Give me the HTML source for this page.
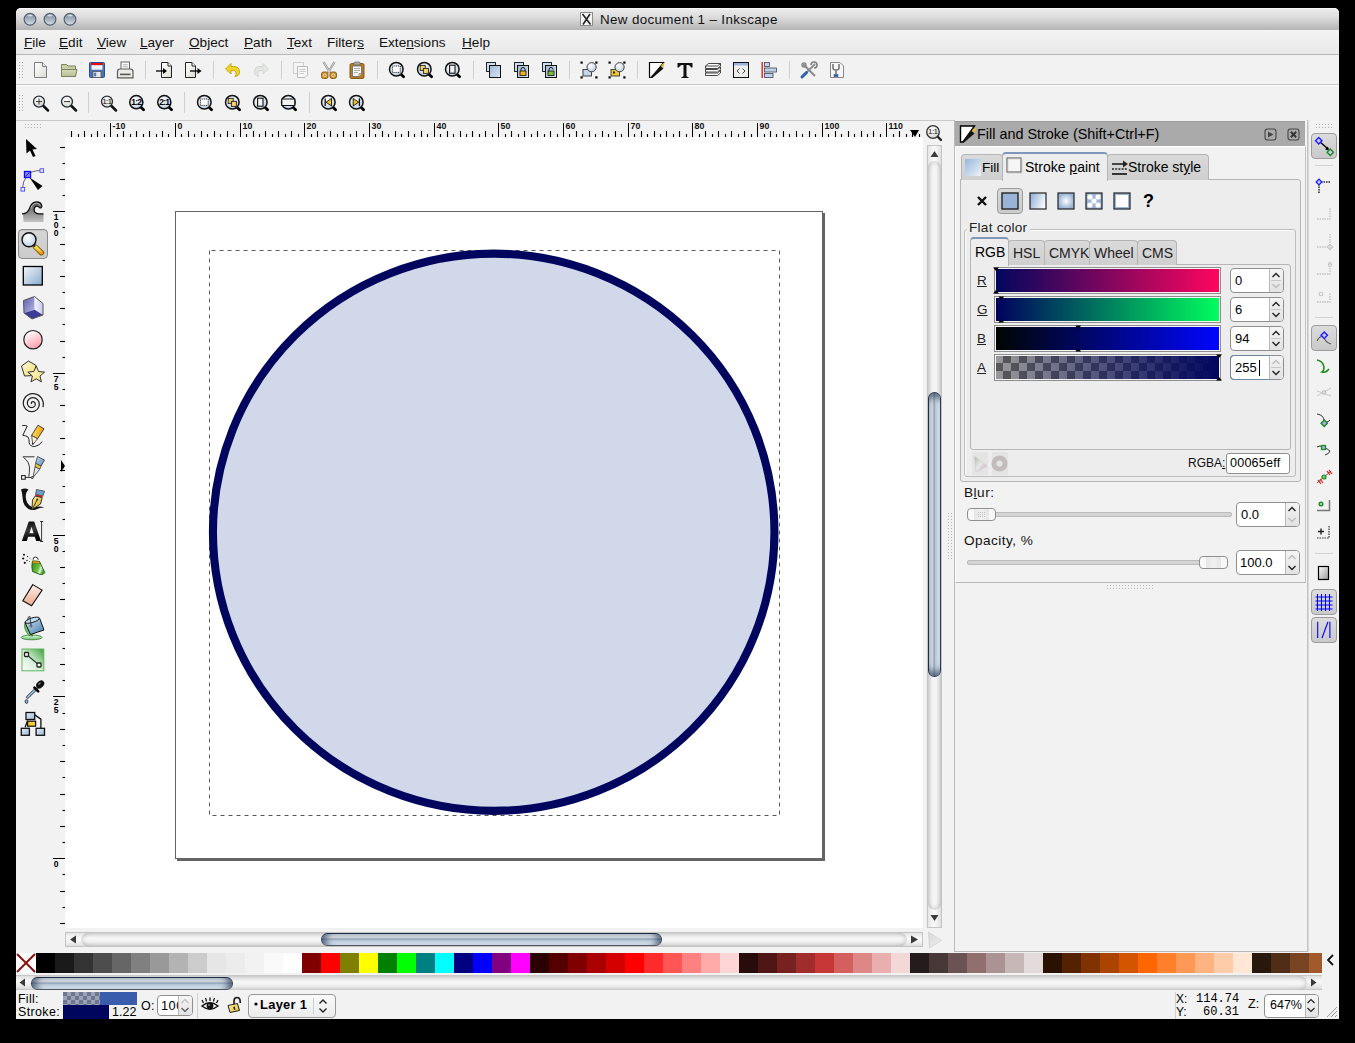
<!DOCTYPE html>
<html><head><meta charset="utf-8"><title>Inkscape</title>
<style>
html,body{margin:0;padding:0;background:#000;}
#root{position:relative;width:1355px;height:1043px;overflow:hidden;background:#000;font-family:"Liberation Sans",sans-serif;}
#root div,#root svg,#root span{position:absolute;box-sizing:border-box;}
#root svg{overflow:visible;}
#root .t{white-space:nowrap;font-size:13px;color:#000;line-height:1;}
#root span.u{position:static;text-decoration:underline;}
</style></head><body><div id="root">
<div style="left:16px;top:8px;width:1323px;height:1011px;background:#f2f2f2;border-radius:5px 5px 0 0;"></div>
<div style="left:16px;top:8px;width:1323px;height:22px;background:linear-gradient(#ececec,#d9d9d9 45%,#b4b4b4);border-radius:5px 5px 0 0;border-top:1px solid #f6f6f6;"></div>
<svg style="left:23px;top:12px;" width="14" height="14" viewBox="0 0 14 14"><defs><linearGradient id="tl30" x1="0" y1="0" x2="0" y2="1"><stop offset="0" stop-color="#7b8a9a"/><stop offset="0.55" stop-color="#a9b6c3"/><stop offset="1" stop-color="#d6e0e8"/></linearGradient></defs><circle cx="7" cy="7.2" r="5.9" fill="url(#tl30)" stroke="#4f5b67" stroke-width="1.1"/><ellipse cx="7" cy="3.6" rx="2.6" ry="1" fill="#e8eef4" opacity="0.75"/></svg>
<svg style="left:43px;top:12px;" width="14" height="14" viewBox="0 0 14 14"><defs><linearGradient id="tl50" x1="0" y1="0" x2="0" y2="1"><stop offset="0" stop-color="#7b8a9a"/><stop offset="0.55" stop-color="#a9b6c3"/><stop offset="1" stop-color="#d6e0e8"/></linearGradient></defs><circle cx="7" cy="7.2" r="5.9" fill="url(#tl50)" stroke="#4f5b67" stroke-width="1.1"/><ellipse cx="7" cy="3.6" rx="2.6" ry="1" fill="#e8eef4" opacity="0.75"/></svg>
<svg style="left:63px;top:12px;" width="14" height="14" viewBox="0 0 14 14"><defs><linearGradient id="tl70" x1="0" y1="0" x2="0" y2="1"><stop offset="0" stop-color="#7b8a9a"/><stop offset="0.55" stop-color="#a9b6c3"/><stop offset="1" stop-color="#d6e0e8"/></linearGradient></defs><circle cx="7" cy="7.2" r="5.9" fill="url(#tl70)" stroke="#4f5b67" stroke-width="1.1"/><ellipse cx="7" cy="3.6" rx="2.6" ry="1" fill="#e8eef4" opacity="0.75"/></svg>
<svg style="left:580px;top:12px;" width="13" height="14" viewBox="0 0 13 14"><rect x="0.5" y="0.5" width="12" height="13" fill="#f4f4f4" stroke="#8a8a8a"/><path d="M2.5 2 L10.5 12.5 M10 2 L3 12.5" stroke="#222" stroke-width="1.6"/></svg>
<span class="t" style="left:600px;top:13px;font-size:13.4px;letter-spacing:0.35px;color:#111;">New document 1 &#8211; Inkscape</span>
<div style="left:16px;top:30px;width:1323px;height:25px;background:linear-gradient(#f3f3f3,#e9e9e9);border-bottom:1px solid #b8b8b8;"></div>
<span class="t" style="left:24px;top:36px;font-size:13.6px;color:#111;"><span class="u">F</span>ile</span>
<span class="t" style="left:59px;top:36px;font-size:13.6px;color:#111;"><span class="u">E</span>dit</span>
<span class="t" style="left:97px;top:36px;font-size:13.6px;color:#111;"><span class="u">V</span>iew</span>
<span class="t" style="left:140px;top:36px;font-size:13.6px;color:#111;"><span class="u">L</span>ayer</span>
<span class="t" style="left:189px;top:36px;font-size:13.6px;color:#111;"><span class="u">O</span>bject</span>
<span class="t" style="left:244px;top:36px;font-size:13.6px;color:#111;"><span class="u">P</span>ath</span>
<span class="t" style="left:287px;top:36px;font-size:13.6px;color:#111;"><span class="u">T</span>ext</span>
<span class="t" style="left:327px;top:36px;font-size:13.6px;color:#111;">Filter<span class="u">s</span></span>
<span class="t" style="left:379px;top:36px;font-size:13.6px;color:#111;">Exte<span class="u">n</span>sions</span>
<span class="t" style="left:462px;top:36px;font-size:13.6px;color:#111;"><span class="u">H</span>elp</span>
<div style="left:16px;top:55px;width:1323px;height:30px;background:#f2f2f2;border-bottom:1px solid #c6c6c6;"></div>
<div style="left:16px;top:85px;width:1323px;height:1px;background:#fcfcfc;"></div>
<div style="left:16px;top:86px;width:1323px;height:35px;background:#f2f2f2;border-bottom:1px solid #c8c8c8;"></div>
<svg style="left:19px;top:62px;" width="6" height="18" viewBox="0 0 6 18"><rect x="0" y="0" width="1" height="1" fill="#aaa"/><rect x="3" y="0" width="1" height="1" fill="#aaa"/><rect x="0" y="3" width="1" height="1" fill="#aaa"/><rect x="3" y="3" width="1" height="1" fill="#aaa"/><rect x="0" y="6" width="1" height="1" fill="#aaa"/><rect x="3" y="6" width="1" height="1" fill="#aaa"/><rect x="0" y="9" width="1" height="1" fill="#aaa"/><rect x="3" y="9" width="1" height="1" fill="#aaa"/><rect x="0" y="12" width="1" height="1" fill="#aaa"/><rect x="3" y="12" width="1" height="1" fill="#aaa"/><rect x="0" y="15" width="1" height="1" fill="#aaa"/><rect x="3" y="15" width="1" height="1" fill="#aaa"/></svg>
<svg style="left:19px;top:95px;" width="6" height="18" viewBox="0 0 6 18"><rect x="0" y="0" width="1" height="1" fill="#aaa"/><rect x="3" y="0" width="1" height="1" fill="#aaa"/><rect x="0" y="3" width="1" height="1" fill="#aaa"/><rect x="3" y="3" width="1" height="1" fill="#aaa"/><rect x="0" y="6" width="1" height="1" fill="#aaa"/><rect x="3" y="6" width="1" height="1" fill="#aaa"/><rect x="0" y="9" width="1" height="1" fill="#aaa"/><rect x="3" y="9" width="1" height="1" fill="#aaa"/><rect x="0" y="12" width="1" height="1" fill="#aaa"/><rect x="3" y="12" width="1" height="1" fill="#aaa"/><rect x="0" y="15" width="1" height="1" fill="#aaa"/><rect x="3" y="15" width="1" height="1" fill="#aaa"/></svg>
<svg style="left:0;top:0" width="0" height="0"><defs><linearGradient id="gpage" x1="0" y1="0" x2="1" y2="1"><stop offset="0" stop-color="#ffffff"/><stop offset="1" stop-color="#dcdcd6"/></linearGradient><linearGradient id="gblue" x1="0" y1="0" x2="1" y2="1"><stop offset="0" stop-color="#aec6e0"/><stop offset="1" stop-color="#e6eef6"/></linearGradient><linearGradient id="gblue2" x1="0" y1="0" x2="1" y2="1"><stop offset="0" stop-color="#9fb9d6"/><stop offset="1" stop-color="#dbe6f1"/></linearGradient><radialGradient id="glens" cx="40%" cy="35%" r="70%"><stop offset="0" stop-color="#ffffff"/><stop offset="1" stop-color="#b9cde3"/></radialGradient><radialGradient id="glensg" cx="40%" cy="35%" r="70%"><stop offset="0" stop-color="#ffffff"/><stop offset="1" stop-color="#d0d4cc"/></radialGradient><linearGradient id="gfolder" x1="0" y1="0" x2="0" y2="1"><stop offset="0" stop-color="#d6dcb8"/><stop offset="1" stop-color="#b6be93"/></linearGradient></defs></svg>
<svg style="left:32px;top:61px;" width="18" height="18" viewBox="0 0 18 18"><path d="M2.5 1.5 H10.5 L14.5 5.5 V16.5 H2.5 Z" fill="url(#gpage)" stroke="#7c7c7c"/><path d="M10.5 1.5 V5.5 H14.5" fill="#eee" stroke="#7c7c7c"/></svg>
<svg style="left:60px;top:61px;" width="18" height="18" viewBox="0 0 18 18"><path d="M1.5 3.5 H6.5 L8 5 H15.5 V15.5 H1.5 Z" fill="#c8cfa6" stroke="#7d8360"/><path d="M1.5 8.5 H17 L15.5 15.5 H1.5 Z" fill="url(#gfolder)" stroke="#7d8360"/></svg>
<svg style="left:88px;top:61px;" width="18" height="18" viewBox="0 0 18 18"><rect x="1.5" y="1.5" width="15" height="15" rx="1" fill="#4a72b8" stroke="#2b4f8f"/><rect x="3" y="2" width="12" height="2.2" fill="#e01010"/><rect x="3.5" y="4.2" width="11" height="4.5" fill="#f4f4f4"/><rect x="5" y="10.5" width="8" height="6" fill="#e8e8e8" stroke="#555" stroke-width="0.8"/><rect x="6.2" y="11.7" width="2" height="3.6" fill="#4a72b8"/></svg>
<svg style="left:116px;top:61px;" width="18" height="18" viewBox="0 0 18 18"><rect x="5" y="1" width="8.5" height="8" fill="#fafafa" stroke="#666" stroke-width="1"/><path d="M6.8 3.8 H11.8 M6.8 5.8 H11.8" stroke="#aaa" stroke-width="0.9"/><path d="M1.5 10.5 Q1.5 8 4 8 H14.5 Q17 8 17 10.5 V16.8 H1.5 Z" fill="#ecece6" stroke="#5a5a5a" stroke-width="1.2"/><rect x="4" y="12.6" width="10.5" height="1.6" fill="#555"/></svg>
<div style="left:145px;top:61px;width:1px;height:18px;background:#cfcfcf;"></div>
<svg style="left:156px;top:61px;" width="18" height="18" viewBox="0 0 18 18"><path d="M5.5 1.5 H12 L15.5 5 V16.5 H5.5 Z" fill="url(#gpage)" stroke="#222"/><path d="M12 1.5 V5 H15.5" fill="#fff" stroke="#222"/><path d="M0 10 H8" stroke="#000" stroke-width="1.3"/><path d="M7 7 L11 10 L7 13 Z" fill="#000"/></svg>
<svg style="left:184px;top:61px;" width="18" height="18" viewBox="0 0 18 18"><path d="M1.5 1.5 H8 L11.5 5 V16.5 H1.5 Z" fill="url(#gpage)" stroke="#222"/><path d="M8 1.5 V5 H11.5" fill="#fff" stroke="#222"/><path d="M6 10 H14" stroke="#000" stroke-width="1.3"/><path d="M13.5 7 L17.5 10 L13.5 13 Z" fill="#000"/></svg>
<div style="left:213px;top:61px;width:1px;height:18px;background:#cfcfcf;"></div>
<svg style="left:224px;top:61px;" width="18" height="18" viewBox="0 0 18 18"><path d="M1.5 8 L7 2.5 V5.5 H9.5 Q15.5 5.5 15.5 11 Q15.5 15 11 15.5 Q13 13 12 11 Q11 9.5 9 9.5 H7 V13 Z" fill="#f3d22a" stroke="#c2a000" stroke-width="0.9"/></svg>
<svg style="left:252px;top:61px;" width="18" height="18" viewBox="0 0 18 18"><path d="M16.5 8 L11 2.5 V5.5 H8.5 Q2.5 5.5 2.5 11 Q2.5 15 7 15.5 Q5 13 6 11 Q7 9.5 9 9.5 H11 V13 Z" fill="#e4e6e4" stroke="#cfd2cf" stroke-width="0.9"/></svg>
<div style="left:281px;top:61px;width:1px;height:18px;background:#cfcfcf;"></div>
<svg style="left:292px;top:61px;" width="18" height="18" viewBox="0 0 18 18"><rect x="1.5" y="1.5" width="10" height="11" fill="#f4f4f4" stroke="#cfcfcf"/><path d="M5.5 5.5 H15.5 V14 L13 16.5 H5.5 Z" fill="#f8f8f8" stroke="#b9b9b9"/><path d="M7.5 8.5 H13.5 M7.5 10.5 H13.5 M7.5 12.5 H12" stroke="#c8c8c8"/></svg>
<svg style="left:320px;top:61px;" width="18" height="18" viewBox="0 0 18 18"><path d="M3.5 1 L10 11.5 M14.5 1 L8 11.5" stroke="#8c8c8c" stroke-width="2.2"/><path d="M3.5 1 L10 11.5 M14.5 1 L8 11.5" stroke="#e8e8e8" stroke-width="0.8"/><rect x="1.5" y="11" width="6.5" height="6.5" rx="2" fill="#c8902a" stroke="#8a5a10" stroke-width="0.9"/><rect x="10" y="11" width="6.5" height="6.5" rx="2" fill="#c8902a" stroke="#8a5a10" stroke-width="0.9"/><circle cx="4.75" cy="14.25" r="1.5" fill="none" stroke="#f4e0b8" stroke-width="0.9"/><circle cx="13.25" cy="14.25" r="1.5" fill="none" stroke="#f4e0b8" stroke-width="0.9"/></svg>
<svg style="left:348px;top:61px;" width="18" height="18" viewBox="0 0 18 18"><rect x="2" y="2.5" width="14" height="15" rx="1.5" fill="#b87a22" stroke="#7a4e0e" stroke-width="0.9"/><rect x="6" y="1" width="6" height="3" rx="1" fill="#aaa" stroke="#666" stroke-width="0.7"/><path d="M4.5 5 H13.5 V12.5 L11 15.5 H4.5 Z" fill="#f7f7f7" stroke="#666" stroke-width="0.8"/><path d="M11 15.5 V12.5 H13.5" fill="#ddd" stroke="#666" stroke-width="0.6"/><path d="M6 7.5 H12 M6 9.5 H12 M6 11.5 H10" stroke="#999" stroke-width="0.8"/></svg>
<div style="left:377px;top:61px;width:1px;height:18px;background:#cfcfcf;"></div>
<svg style="left:388px;top:61px;" width="18" height="18" viewBox="0 0 18 18"><path d="M13.2 13.4 L15.6 15.8" stroke="#000" stroke-width="2.8" stroke-linecap="round"/><circle cx="8.3" cy="8.2" r="6.8" fill="url(#glens)" stroke="#111" stroke-width="1.5"/><rect x="4.4" y="5" width="7.8" height="6.4" fill="#fff" stroke="#111" stroke-width="1" stroke-dasharray="1 0.9"/></svg>
<svg style="left:416px;top:61px;" width="18" height="18" viewBox="0 0 18 18"><path d="M13.2 13.4 L15.6 15.8" stroke="#000" stroke-width="2.8" stroke-linecap="round"/><circle cx="8.3" cy="8.2" r="6.8" fill="url(#glens)" stroke="#111" stroke-width="1.5"/><rect x="4.2" y="4.4" width="5" height="5" fill="#f6d46a" stroke="#222" stroke-width="0.9"/><rect x="7.4" y="7.4" width="5" height="5" fill="#f6d46a" stroke="#222" stroke-width="0.9"/></svg>
<svg style="left:444px;top:61px;" width="18" height="18" viewBox="0 0 18 18"><path d="M13.2 13.4 L15.6 15.8" stroke="#000" stroke-width="2.8" stroke-linecap="round"/><circle cx="8.3" cy="8.2" r="6.8" fill="url(#glens)" stroke="#111" stroke-width="1.5"/><rect x="5.6" y="4.2" width="5.4" height="8" fill="#f3f3f3" stroke="#111" stroke-width="1.1"/></svg>
<div style="left:473px;top:61px;width:1px;height:18px;background:#cfcfcf;"></div>
<svg style="left:484px;top:61px;" width="18" height="18" viewBox="0 0 18 18"><rect x="2.5" y="1.5" width="9" height="9" fill="#cfdcec" stroke="#223"/><rect x="5.5" y="4.5" width="11" height="12" fill="url(#gblue2)" stroke="#111"/></svg>
<svg style="left:512px;top:61px;" width="18" height="18" viewBox="0 0 18 18"><rect x="2.5" y="1.5" width="9" height="9" fill="#cfdcec" stroke="#223"/><rect x="5.5" y="4.5" width="11" height="12" fill="url(#gblue2)" stroke="#111"/><path d="M9 10 V8.5 Q9 6.5 11 6.5 Q13 6.5 13 8.5 V10" fill="none" stroke="#111"/><rect x="8" y="10" width="6" height="4.5" fill="#f2b320" stroke="#111" stroke-width="0.8"/></svg>
<svg style="left:540px;top:61px;" width="18" height="18" viewBox="0 0 18 18"><rect x="2.5" y="1.5" width="9" height="9" fill="#cfdcec" stroke="#223"/><rect x="5.5" y="4.5" width="11" height="12" fill="url(#gblue2)" stroke="#111"/><path d="M9 10 V8.5 Q9 6.5 11 6.5 Q13 6.5 13 8.5" fill="none" stroke="#111"/><rect x="8" y="10" width="6" height="4.5" fill="#7cbf3a" stroke="#111" stroke-width="0.8"/></svg>
<div style="left:569px;top:61px;width:1px;height:18px;background:#cfcfcf;"></div>
<svg style="left:580px;top:61px;" width="18" height="18" viewBox="0 0 18 18"><rect x="0.5" y="0.5" width="2.2" height="2.2" fill="#000"/><rect x="15.3" y="0.5" width="2.2" height="2.2" fill="#000"/><rect x="0.5" y="15.3" width="2.2" height="2.2" fill="#000"/><rect x="15.3" y="15.3" width="2.2" height="2.2" fill="#000"/><rect x="3" y="8.5" width="8.5" height="6.5" fill="#c4d6ea" stroke="#333" stroke-width="0.9"/><circle cx="11.6" cy="6.2" r="4.6" fill="url(#glens)" stroke="#333" stroke-width="0.9"/></svg>
<svg style="left:608px;top:61px;" width="18" height="18" viewBox="0 0 18 18"><rect x="0.5" y="0.5" width="2.2" height="2.2" fill="#000"/><rect x="15.3" y="0.5" width="2.2" height="2.2" fill="#000"/><rect x="0.5" y="15.3" width="2.2" height="2.2" fill="#000"/><rect x="15.3" y="15.3" width="2.2" height="2.2" fill="#000"/><rect x="3" y="8.5" width="8.5" height="6.5" fill="#f1c731" stroke="#333" stroke-width="0.9"/><rect x="5" y="10.5" width="2" height="2" fill="#222"/><circle cx="11.6" cy="6.2" r="4.6" fill="url(#glens)" stroke="#333" stroke-width="0.9"/></svg>
<div style="left:637px;top:61px;width:1px;height:18px;background:#cfcfcf;"></div>
<svg style="left:648px;top:61px;" width="18" height="18" viewBox="0 0 18 18"><path d="M1.5 1.5 H15.5 L4 16.5 H1.5 Z" fill="#fff" stroke="#000" stroke-width="1.2"/><path d="M2.5 16 L12.5 5 L15.5 7.5 L5 16.5 Z" fill="#111"/><path d="M13 4 L16.5 1.5 L15.5 7 Z" fill="#f0b81a"/></svg>
<svg style="left:676px;top:61px;" width="18" height="18" viewBox="0 0 18 18"><path d="M1.5 2 H16.5 V6.5 H15 Q14.5 4 12 4 H10.5 V15 Q10.5 16 12.5 16 V17 H5.5 V16 Q7.5 16 7.5 15 V4 H6 Q3.5 4 3 6.5 H1.5 Z" fill="#111"/></svg>
<svg style="left:704px;top:61px;" width="18" height="18" viewBox="0 0 18 18"><path d="M1.5 12 L4.5 9.5 H16.5 V12 L13.5 14.5 H1.5 Z" fill="#fff" stroke="#333" stroke-width="0.9"/><path d="M1.5 12 H13.5 L16.5 9.5" fill="none" stroke="#333" stroke-width="0.9"/><path d="M1.5 8.5 L4.5 6 H16.5 V8.5 L13.5 11 H1.5 Z" fill="#fff" stroke="#333" stroke-width="0.9"/><path d="M1.5 8.5 H13.5 L16.5 6" fill="none" stroke="#333" stroke-width="0.9"/><path d="M1.5 5 L4.5 2.5 H16.5 V5 L13.5 7.5 H1.5 Z" fill="#fff" stroke="#333" stroke-width="0.9"/><path d="M1.5 5 H13.5 L16.5 2.5" fill="none" stroke="#333" stroke-width="0.9"/></svg>
<svg style="left:732px;top:61px;" width="18" height="18" viewBox="0 0 18 18"><rect x="1.5" y="1.5" width="15" height="15" fill="#eeeeea" stroke="#111"/><rect x="2" y="2" width="14" height="2.5" fill="#9db7d8"/><path d="M7.5 7.5 L5 10 L7.5 12.5 M10.5 7.5 L13 10 L10.5 12.5" fill="none" stroke="#333" stroke-width="0.9"/></svg>
<svg style="left:760px;top:61px;" width="18" height="18" viewBox="0 0 18 18"><rect x="1.5" y="1" width="1.4" height="16" fill="#d22"/><rect x="4.5" y="1.5" width="5" height="4" fill="#bcd2ea" stroke="#445" stroke-width="0.8"/><rect x="4.5" y="7" width="12" height="4" fill="#bcd2ea" stroke="#445" stroke-width="0.8"/><rect x="4.5" y="12.5" width="8.5" height="4" fill="#bcd2ea" stroke="#445" stroke-width="0.8"/></svg>
<div style="left:789px;top:61px;width:1px;height:18px;background:#cfcfcf;"></div>
<svg style="left:800px;top:61px;" width="18" height="18" viewBox="0 0 18 18"><path d="M3 3 L15 15" stroke="#8a8a8a" stroke-width="2"/><path d="M15 3 L6 12" stroke="#8f8f8f" stroke-width="2"/><path d="M2 16 L6.5 11.5" stroke="#2e5fb0" stroke-width="3" stroke-linecap="round"/><path d="M11 4 A3 3 0 1 1 14 7" fill="none" stroke="#7f7f7f" stroke-width="1.6"/><circle cx="4" cy="4" r="2" fill="none" stroke="#888" stroke-width="1.4"/></svg>
<svg style="left:828px;top:61px;" width="18" height="18" viewBox="0 0 18 18"><path d="M2.5 1.5 H12 L15.5 5 V16.5 H2.5 Z" fill="#f6f6f6" stroke="#888"/><path d="M5 3 V7 Q5 9 8 9 Q11 9 11 7 V3 M8 9 V16" fill="none" stroke="#777" stroke-width="1.6"/><path d="M6.5 13 V16 M9.5 13 V16 M6.5 14.5 H9.5" stroke="#2e5fb0" stroke-width="1.4"/></svg>
<svg style="left:32px;top:94px;" width="18" height="18" viewBox="0 0 18 18"><path d="M11 11.5 L16 16.5" stroke="#111" stroke-width="2.5" stroke-linecap="round"/><circle cx="7" cy="7.6" r="5.5" fill="url(#glensg)" stroke="#263038" stroke-width="1.25"/><path d="M4 7.6 H10 M7 4.6 V10.6" stroke="#333" stroke-width="1"/></svg>
<svg style="left:60px;top:94px;" width="18" height="18" viewBox="0 0 18 18"><path d="M11 11.5 L16 16.5" stroke="#111" stroke-width="2.5" stroke-linecap="round"/><circle cx="7" cy="7.6" r="5.5" fill="url(#glensg)" stroke="#263038" stroke-width="1.25"/><path d="M4 7.6 H10" stroke="#333" stroke-width="1"/></svg>
<div style="left:88px;top:92px;width:1px;height:21px;background:#cfcfcf;"></div>
<svg style="left:100px;top:94px;" width="18" height="18" viewBox="0 0 18 18"><path d="M11 11.5 L16 16.5" stroke="#111" stroke-width="2.5" stroke-linecap="round"/><circle cx="7" cy="7.6" r="5.5" fill="url(#glensg)" stroke="#263038" stroke-width="1.25"/><text x="7" y="10" font-size="6.6" font-weight="bold" text-anchor="middle" fill="#3a3a3a" font-family="Liberation Sans" letter-spacing="-0.3">1:1</text></svg>
<svg style="left:128px;top:94px;" width="18" height="18" viewBox="0 0 18 18"><path d="M13.2 13.4 L15.6 15.8" stroke="#000" stroke-width="2.8" stroke-linecap="round"/><circle cx="8.3" cy="8.2" r="6.6" fill="url(#glens)" stroke="#111" stroke-width="1.5"/><text x="8.3" y="11.2" font-size="8.6" font-weight="bold" text-anchor="middle" fill="#000" font-family="Liberation Sans" letter-spacing="-0.7">1:2</text></svg>
<svg style="left:156px;top:94px;" width="18" height="18" viewBox="0 0 18 18"><path d="M13.2 13.4 L15.6 15.8" stroke="#000" stroke-width="2.8" stroke-linecap="round"/><circle cx="8.3" cy="8.2" r="6.6" fill="url(#glens)" stroke="#111" stroke-width="1.5"/><text x="8.3" y="11.2" font-size="8.6" font-weight="bold" text-anchor="middle" fill="#000" font-family="Liberation Sans" letter-spacing="-0.7">2:1</text></svg>
<div style="left:184px;top:92px;width:1px;height:21px;background:#cfcfcf;"></div>
<svg style="left:196px;top:94px;" width="18" height="18" viewBox="0 0 18 18"><path d="M13.2 13.4 L15.6 15.8" stroke="#000" stroke-width="2.8" stroke-linecap="round"/><circle cx="8.3" cy="8.2" r="6.8" fill="url(#glens)" stroke="#111" stroke-width="1.5"/><rect x="4.4" y="5" width="7.8" height="6.4" fill="#fff" stroke="#111" stroke-width="1" stroke-dasharray="1 0.9"/></svg>
<svg style="left:224px;top:94px;" width="18" height="18" viewBox="0 0 18 18"><path d="M13.2 13.4 L15.6 15.8" stroke="#000" stroke-width="2.8" stroke-linecap="round"/><circle cx="8.3" cy="8.2" r="6.8" fill="url(#glens)" stroke="#111" stroke-width="1.5"/><rect x="4.2" y="4.4" width="5" height="5" fill="#f6d46a" stroke="#222" stroke-width="0.9"/><rect x="7.4" y="7.4" width="5" height="5" fill="#f6d46a" stroke="#222" stroke-width="0.9"/></svg>
<svg style="left:252px;top:94px;" width="18" height="18" viewBox="0 0 18 18"><path d="M13.2 13.4 L15.6 15.8" stroke="#000" stroke-width="2.8" stroke-linecap="round"/><circle cx="8.3" cy="8.2" r="6.8" fill="url(#glens)" stroke="#111" stroke-width="1.5"/><rect x="5.6" y="4.2" width="5.4" height="8" fill="#f3f3f3" stroke="#111" stroke-width="1.1"/></svg>
<svg style="left:280px;top:94px;" width="18" height="18" viewBox="0 0 18 18"><path d="M13.2 13.4 L15.6 15.8" stroke="#000" stroke-width="2.8" stroke-linecap="round"/><circle cx="8.3" cy="8.2" r="6.8" fill="url(#glens)" stroke="#111" stroke-width="1.5"/><path d="M1.8 5 H14.8 V11.5 H1.8 Z" fill="#f3f3f3" stroke="#111" stroke-width="1.1"/></svg>
<div style="left:309px;top:92px;width:1px;height:21px;background:#cfcfcf;"></div>
<svg style="left:320px;top:94px;" width="18" height="18" viewBox="0 0 18 18"><path d="M13.2 13.4 L15.6 15.8" stroke="#000" stroke-width="2.8" stroke-linecap="round"/><circle cx="8.3" cy="8.2" r="6.8" fill="url(#glens)" stroke="#111" stroke-width="1.5"/><path d="M11.5 4.4 L6 8.2 L11.5 12 Z" fill="#f3c21b" stroke="#111" stroke-width="0.9"/><path d="M5.2 4.4 V12" stroke="#111" stroke-width="1.3"/></svg>
<svg style="left:348px;top:94px;" width="18" height="18" viewBox="0 0 18 18"><path d="M13.2 13.4 L15.6 15.8" stroke="#000" stroke-width="2.8" stroke-linecap="round"/><circle cx="8.3" cy="8.2" r="6.8" fill="url(#glens)" stroke="#111" stroke-width="1.5"/><path d="M5.2 4.4 L10.6 8.2 L5.2 12 Z" fill="#f3c21b" stroke="#111" stroke-width="0.9"/><path d="M11.4 4.4 V12" stroke="#111" stroke-width="1.3"/></svg>
<div style="left:16px;top:121px;width:938px;height:16px;background:#f2f2f2;"></div>
<div style="left:65px;top:137px;width:858px;height:791px;background:#ffffff;"></div>
<svg style="left:65px;top:121px;" width="858" height="16" viewBox="0 0 858 16"><path d="M6.5 10 V16" stroke="#000" stroke-width="1.1"/><path d="M13.5 13 V16" stroke="#000" stroke-width="1.1"/><path d="M19.5 10 V16" stroke="#000" stroke-width="1.1"/><path d="M26.5 13 V16" stroke="#000" stroke-width="1.1"/><path d="M32.5 10 V16" stroke="#000" stroke-width="1.1"/><path d="M39.5 13 V16" stroke="#000" stroke-width="1.1"/><path d="M45.5 2 V16" stroke="#000" stroke-width="1"/><text x="47.5" y="7.8" font-size="8.8" font-weight="bold" font-family="Liberation Sans" fill="#111" letter-spacing="0.15">-10</text><path d="M52.5 13 V16" stroke="#000" stroke-width="1.1"/><path d="M58.5 10 V16" stroke="#000" stroke-width="1.1"/><path d="M65.5 13 V16" stroke="#000" stroke-width="1.1"/><path d="M71.5 10 V16" stroke="#000" stroke-width="1.1"/><path d="M78.5 13 V16" stroke="#000" stroke-width="1.1"/><path d="M84.5 10 V16" stroke="#000" stroke-width="1.1"/><path d="M91.5 13 V16" stroke="#000" stroke-width="1.1"/><path d="M97.5 10 V16" stroke="#000" stroke-width="1.1"/><path d="M103.5 13 V16" stroke="#000" stroke-width="1.1"/><path d="M110.5 2 V16" stroke="#000" stroke-width="1"/><text x="112.5" y="7.8" font-size="8.8" font-weight="bold" font-family="Liberation Sans" fill="#111" letter-spacing="0.15">0</text><path d="M116.5 13 V16" stroke="#000" stroke-width="1.1"/><path d="M123.5 10 V16" stroke="#000" stroke-width="1.1"/><path d="M129.5 13 V16" stroke="#000" stroke-width="1.1"/><path d="M136.5 10 V16" stroke="#000" stroke-width="1.1"/><path d="M142.5 13 V16" stroke="#000" stroke-width="1.1"/><path d="M149.5 10 V16" stroke="#000" stroke-width="1.1"/><path d="M155.5 13 V16" stroke="#000" stroke-width="1.1"/><path d="M162.5 10 V16" stroke="#000" stroke-width="1.1"/><path d="M168.5 13 V16" stroke="#000" stroke-width="1.1"/><path d="M175.5 2 V16" stroke="#000" stroke-width="1"/><text x="177.5" y="7.8" font-size="8.8" font-weight="bold" font-family="Liberation Sans" fill="#111" letter-spacing="0.15">10</text><path d="M181.5 13 V16" stroke="#000" stroke-width="1.1"/><path d="M188.5 10 V16" stroke="#000" stroke-width="1.1"/><path d="M194.5 13 V16" stroke="#000" stroke-width="1.1"/><path d="M200.5 10 V16" stroke="#000" stroke-width="1.1"/><path d="M207.5 13 V16" stroke="#000" stroke-width="1.1"/><path d="M213.5 10 V16" stroke="#000" stroke-width="1.1"/><path d="M220.5 13 V16" stroke="#000" stroke-width="1.1"/><path d="M226.5 10 V16" stroke="#000" stroke-width="1.1"/><path d="M233.5 13 V16" stroke="#000" stroke-width="1.1"/><path d="M239.5 2 V16" stroke="#000" stroke-width="1"/><text x="241.5" y="7.8" font-size="8.8" font-weight="bold" font-family="Liberation Sans" fill="#111" letter-spacing="0.15">20</text><path d="M246.5 13 V16" stroke="#000" stroke-width="1.1"/><path d="M252.5 10 V16" stroke="#000" stroke-width="1.1"/><path d="M259.5 13 V16" stroke="#000" stroke-width="1.1"/><path d="M265.5 10 V16" stroke="#000" stroke-width="1.1"/><path d="M272.5 13 V16" stroke="#000" stroke-width="1.1"/><path d="M278.5 10 V16" stroke="#000" stroke-width="1.1"/><path d="M285.5 13 V16" stroke="#000" stroke-width="1.1"/><path d="M291.5 10 V16" stroke="#000" stroke-width="1.1"/><path d="M298.5 13 V16" stroke="#000" stroke-width="1.1"/><path d="M304.5 2 V16" stroke="#000" stroke-width="1"/><text x="306.5" y="7.8" font-size="8.8" font-weight="bold" font-family="Liberation Sans" fill="#111" letter-spacing="0.15">30</text><path d="M310.5 13 V16" stroke="#000" stroke-width="1.1"/><path d="M317.5 10 V16" stroke="#000" stroke-width="1.1"/><path d="M323.5 13 V16" stroke="#000" stroke-width="1.1"/><path d="M330.5 10 V16" stroke="#000" stroke-width="1.1"/><path d="M336.5 13 V16" stroke="#000" stroke-width="1.1"/><path d="M343.5 10 V16" stroke="#000" stroke-width="1.1"/><path d="M349.5 13 V16" stroke="#000" stroke-width="1.1"/><path d="M356.5 10 V16" stroke="#000" stroke-width="1.1"/><path d="M362.5 13 V16" stroke="#000" stroke-width="1.1"/><path d="M369.5 2 V16" stroke="#000" stroke-width="1"/><text x="371.5" y="7.8" font-size="8.8" font-weight="bold" font-family="Liberation Sans" fill="#111" letter-spacing="0.15">40</text><path d="M375.5 13 V16" stroke="#000" stroke-width="1.1"/><path d="M382.5 10 V16" stroke="#000" stroke-width="1.1"/><path d="M388.5 13 V16" stroke="#000" stroke-width="1.1"/><path d="M395.5 10 V16" stroke="#000" stroke-width="1.1"/><path d="M401.5 13 V16" stroke="#000" stroke-width="1.1"/><path d="M407.5 10 V16" stroke="#000" stroke-width="1.1"/><path d="M414.5 13 V16" stroke="#000" stroke-width="1.1"/><path d="M420.5 10 V16" stroke="#000" stroke-width="1.1"/><path d="M427.5 13 V16" stroke="#000" stroke-width="1.1"/><path d="M433.5 2 V16" stroke="#000" stroke-width="1"/><text x="435.5" y="7.8" font-size="8.8" font-weight="bold" font-family="Liberation Sans" fill="#111" letter-spacing="0.15">50</text><path d="M440.5 13 V16" stroke="#000" stroke-width="1.1"/><path d="M446.5 10 V16" stroke="#000" stroke-width="1.1"/><path d="M453.5 13 V16" stroke="#000" stroke-width="1.1"/><path d="M459.5 10 V16" stroke="#000" stroke-width="1.1"/><path d="M466.5 13 V16" stroke="#000" stroke-width="1.1"/><path d="M472.5 10 V16" stroke="#000" stroke-width="1.1"/><path d="M479.5 13 V16" stroke="#000" stroke-width="1.1"/><path d="M485.5 10 V16" stroke="#000" stroke-width="1.1"/><path d="M492.5 13 V16" stroke="#000" stroke-width="1.1"/><path d="M498.5 2 V16" stroke="#000" stroke-width="1"/><text x="500.5" y="7.8" font-size="8.8" font-weight="bold" font-family="Liberation Sans" fill="#111" letter-spacing="0.15">60</text><path d="M504.5 13 V16" stroke="#000" stroke-width="1.1"/><path d="M511.5 10 V16" stroke="#000" stroke-width="1.1"/><path d="M517.5 13 V16" stroke="#000" stroke-width="1.1"/><path d="M524.5 10 V16" stroke="#000" stroke-width="1.1"/><path d="M530.5 13 V16" stroke="#000" stroke-width="1.1"/><path d="M537.5 10 V16" stroke="#000" stroke-width="1.1"/><path d="M543.5 13 V16" stroke="#000" stroke-width="1.1"/><path d="M550.5 10 V16" stroke="#000" stroke-width="1.1"/><path d="M556.5 13 V16" stroke="#000" stroke-width="1.1"/><path d="M563.5 2 V16" stroke="#000" stroke-width="1"/><text x="565.5" y="7.8" font-size="8.8" font-weight="bold" font-family="Liberation Sans" fill="#111" letter-spacing="0.15">70</text><path d="M569.5 13 V16" stroke="#000" stroke-width="1.1"/><path d="M576.5 10 V16" stroke="#000" stroke-width="1.1"/><path d="M582.5 13 V16" stroke="#000" stroke-width="1.1"/><path d="M589.5 10 V16" stroke="#000" stroke-width="1.1"/><path d="M595.5 13 V16" stroke="#000" stroke-width="1.1"/><path d="M601.5 10 V16" stroke="#000" stroke-width="1.1"/><path d="M608.5 13 V16" stroke="#000" stroke-width="1.1"/><path d="M614.5 10 V16" stroke="#000" stroke-width="1.1"/><path d="M621.5 13 V16" stroke="#000" stroke-width="1.1"/><path d="M627.5 2 V16" stroke="#000" stroke-width="1"/><text x="629.5" y="7.8" font-size="8.8" font-weight="bold" font-family="Liberation Sans" fill="#111" letter-spacing="0.15">80</text><path d="M634.5 13 V16" stroke="#000" stroke-width="1.1"/><path d="M640.5 10 V16" stroke="#000" stroke-width="1.1"/><path d="M647.5 13 V16" stroke="#000" stroke-width="1.1"/><path d="M653.5 10 V16" stroke="#000" stroke-width="1.1"/><path d="M660.5 13 V16" stroke="#000" stroke-width="1.1"/><path d="M666.5 10 V16" stroke="#000" stroke-width="1.1"/><path d="M673.5 13 V16" stroke="#000" stroke-width="1.1"/><path d="M679.5 10 V16" stroke="#000" stroke-width="1.1"/><path d="M686.5 13 V16" stroke="#000" stroke-width="1.1"/><path d="M692.5 2 V16" stroke="#000" stroke-width="1"/><text x="694.5" y="7.8" font-size="8.8" font-weight="bold" font-family="Liberation Sans" fill="#111" letter-spacing="0.15">90</text><path d="M699.5 13 V16" stroke="#000" stroke-width="1.1"/><path d="M705.5 10 V16" stroke="#000" stroke-width="1.1"/><path d="M711.5 13 V16" stroke="#000" stroke-width="1.1"/><path d="M718.5 10 V16" stroke="#000" stroke-width="1.1"/><path d="M724.5 13 V16" stroke="#000" stroke-width="1.1"/><path d="M731.5 10 V16" stroke="#000" stroke-width="1.1"/><path d="M737.5 13 V16" stroke="#000" stroke-width="1.1"/><path d="M744.5 10 V16" stroke="#000" stroke-width="1.1"/><path d="M750.5 13 V16" stroke="#000" stroke-width="1.1"/><path d="M757.5 2 V16" stroke="#000" stroke-width="1"/><text x="759.5" y="7.8" font-size="8.8" font-weight="bold" font-family="Liberation Sans" fill="#111" letter-spacing="0.15">100</text><path d="M763.5 13 V16" stroke="#000" stroke-width="1.1"/><path d="M770.5 10 V16" stroke="#000" stroke-width="1.1"/><path d="M776.5 13 V16" stroke="#000" stroke-width="1.1"/><path d="M783.5 10 V16" stroke="#000" stroke-width="1.1"/><path d="M789.5 13 V16" stroke="#000" stroke-width="1.1"/><path d="M796.5 10 V16" stroke="#000" stroke-width="1.1"/><path d="M802.5 13 V16" stroke="#000" stroke-width="1.1"/><path d="M808.5 10 V16" stroke="#000" stroke-width="1.1"/><path d="M815.5 13 V16" stroke="#000" stroke-width="1.1"/><path d="M821.5 2 V16" stroke="#000" stroke-width="1"/><text x="823.5" y="7.8" font-size="8.8" font-weight="bold" font-family="Liberation Sans" fill="#111" letter-spacing="0.15">110</text><path d="M828.5 13 V16" stroke="#000" stroke-width="1.1"/><path d="M834.5 10 V16" stroke="#000" stroke-width="1.1"/><path d="M841.5 13 V16" stroke="#000" stroke-width="1.1"/><path d="M847.5 10 V16" stroke="#000" stroke-width="1.1"/><path d="M854.5 13 V16" stroke="#000" stroke-width="1.1"/><path d="M845 9 L854 9 L850 16 Z" fill="#000"/></svg>
<svg style="left:53px;top:137px;" width="12" height="791" viewBox="0 0 12 791"><path d="M7 786.5 H12" stroke="#000" stroke-width="1.1"/><path d="M9.5 770.5 H12" stroke="#000" stroke-width="1.1"/><path d="M7 754.5 H12" stroke="#000" stroke-width="1.1"/><path d="M9.5 737.5 H12" stroke="#000" stroke-width="1.1"/><path d="M0 721.5 H12" stroke="#000" stroke-width="1"/><text x="3.2" y="730.0" font-size="8.6" font-weight="bold" font-family="Liberation Sans" text-anchor="middle" fill="#000">0</text><path d="M9.5 705.5 H12" stroke="#000" stroke-width="1.1"/><path d="M7 689.5 H12" stroke="#000" stroke-width="1.1"/><path d="M9.5 673.5 H12" stroke="#000" stroke-width="1.1"/><path d="M7 657.5 H12" stroke="#000" stroke-width="1.1"/><path d="M9.5 640.5 H12" stroke="#000" stroke-width="1.1"/><path d="M7 624.5 H12" stroke="#000" stroke-width="1.1"/><path d="M9.5 608.5 H12" stroke="#000" stroke-width="1.1"/><path d="M7 592.5 H12" stroke="#000" stroke-width="1.1"/><path d="M9.5 576.5 H12" stroke="#000" stroke-width="1.1"/><path d="M0 559.5 H12" stroke="#000" stroke-width="1"/><text x="3.2" y="568.0" font-size="8.6" font-weight="bold" font-family="Liberation Sans" text-anchor="middle" fill="#000">2</text><text x="3.2" y="576.0" font-size="8.6" font-weight="bold" font-family="Liberation Sans" text-anchor="middle" fill="#000">5</text><path d="M9.5 543.5 H12" stroke="#000" stroke-width="1.1"/><path d="M7 527.5 H12" stroke="#000" stroke-width="1.1"/><path d="M9.5 511.5 H12" stroke="#000" stroke-width="1.1"/><path d="M7 495.5 H12" stroke="#000" stroke-width="1.1"/><path d="M9.5 479.5 H12" stroke="#000" stroke-width="1.1"/><path d="M7 462.5 H12" stroke="#000" stroke-width="1.1"/><path d="M9.5 446.5 H12" stroke="#000" stroke-width="1.1"/><path d="M7 430.5 H12" stroke="#000" stroke-width="1.1"/><path d="M9.5 414.5 H12" stroke="#000" stroke-width="1.1"/><path d="M0 398.5 H12" stroke="#000" stroke-width="1"/><text x="3.2" y="407.0" font-size="8.6" font-weight="bold" font-family="Liberation Sans" text-anchor="middle" fill="#000">5</text><text x="3.2" y="415.0" font-size="8.6" font-weight="bold" font-family="Liberation Sans" text-anchor="middle" fill="#000">0</text><path d="M9.5 382.5 H12" stroke="#000" stroke-width="1.1"/><path d="M7 365.5 H12" stroke="#000" stroke-width="1.1"/><path d="M9.5 349.5 H12" stroke="#000" stroke-width="1.1"/><path d="M7 333.5 H12" stroke="#000" stroke-width="1.1"/><path d="M9.5 317.5 H12" stroke="#000" stroke-width="1.1"/><path d="M7 301.5 H12" stroke="#000" stroke-width="1.1"/><path d="M9.5 284.5 H12" stroke="#000" stroke-width="1.1"/><path d="M7 268.5 H12" stroke="#000" stroke-width="1.1"/><path d="M9.5 252.5 H12" stroke="#000" stroke-width="1.1"/><path d="M0 236.5 H12" stroke="#000" stroke-width="1"/><text x="3.2" y="245.0" font-size="8.6" font-weight="bold" font-family="Liberation Sans" text-anchor="middle" fill="#000">7</text><text x="3.2" y="253.0" font-size="8.6" font-weight="bold" font-family="Liberation Sans" text-anchor="middle" fill="#000">5</text><path d="M9.5 220.5 H12" stroke="#000" stroke-width="1.1"/><path d="M7 204.5 H12" stroke="#000" stroke-width="1.1"/><path d="M9.5 187.5 H12" stroke="#000" stroke-width="1.1"/><path d="M7 171.5 H12" stroke="#000" stroke-width="1.1"/><path d="M9.5 155.5 H12" stroke="#000" stroke-width="1.1"/><path d="M7 139.5 H12" stroke="#000" stroke-width="1.1"/><path d="M9.5 123.5 H12" stroke="#000" stroke-width="1.1"/><path d="M7 107.5 H12" stroke="#000" stroke-width="1.1"/><path d="M9.5 90.5 H12" stroke="#000" stroke-width="1.1"/><path d="M0 74.5 H12" stroke="#000" stroke-width="1"/><text x="3.2" y="83.0" font-size="8.6" font-weight="bold" font-family="Liberation Sans" text-anchor="middle" fill="#000">1</text><text x="3.2" y="91.0" font-size="8.6" font-weight="bold" font-family="Liberation Sans" text-anchor="middle" fill="#000">0</text><text x="3.2" y="99.0" font-size="8.6" font-weight="bold" font-family="Liberation Sans" text-anchor="middle" fill="#000">0</text><path d="M9.5 58.5 H12" stroke="#000" stroke-width="1.1"/><path d="M7 42.5 H12" stroke="#000" stroke-width="1.1"/><path d="M9.5 26.5 H12" stroke="#000" stroke-width="1.1"/><path d="M7 10.5 H12" stroke="#000" stroke-width="1.1"/><path d="M8 323 L8 335 L12 329 Z" fill="#000"/></svg>
<svg style="left:25px;top:124px;" width="18" height="6" viewBox="0 0 18 6"><rect x="0" y="0" width="1" height="1" fill="#b0b0b0"/><rect x="3" y="0" width="1" height="1" fill="#b0b0b0"/><rect x="6" y="0" width="1" height="1" fill="#b0b0b0"/><rect x="9" y="0" width="1" height="1" fill="#b0b0b0"/><rect x="12" y="0" width="1" height="1" fill="#b0b0b0"/><rect x="15" y="0" width="1" height="1" fill="#b0b0b0"/><rect x="0" y="3" width="1" height="1" fill="#b0b0b0"/><rect x="3" y="3" width="1" height="1" fill="#b0b0b0"/><rect x="6" y="3" width="1" height="1" fill="#b0b0b0"/><rect x="9" y="3" width="1" height="1" fill="#b0b0b0"/><rect x="12" y="3" width="1" height="1" fill="#b0b0b0"/><rect x="15" y="3" width="1" height="1" fill="#b0b0b0"/></svg>
<div style="left:175px;top:211px;width:648px;height:648px;border:1px solid #646464;background:#fff;"></div>
<div style="left:823px;top:213px;width:2px;height:648px;background:#646464;"></div>
<div style="left:177px;top:859px;width:648px;height:2px;background:#646464;"></div>
<svg style="left:205px;top:246px" width="580" height="574" viewBox="0 0 580 574"><rect x="4.5" y="4.5" width="570" height="565" fill="none" stroke="#5a5a5a" stroke-width="1" stroke-dasharray="4 4" stroke-dashoffset="-2"/></svg>
<svg style="left:200px;top:240px" width="590" height="585" viewBox="0 0 590 585"><ellipse cx="293.7" cy="292.25" rx="280.75" ry="278.6" fill="#d0d8ea" stroke="#00065e" stroke-width="8.1"/></svg>
<div style="left:18px;top:229px;width:30px;height:30px;border:1px solid #8a8a8a;border-radius:4px;background:linear-gradient(#d6d6d6,#cbcbcb);box-shadow:inset 0 1px 1px rgba(0,0,0,0.08);"></div>
<svg style="left:20px;top:136px;" width="24" height="24" viewBox="0 0 24 24"><path d="M6 3 L17 13 L12.5 13.5 L15.5 20 L13 21 L10 14.5 L6.5 17.5 Z" fill="#000"/></svg>
<svg style="left:20px;top:168px;" width="24" height="24" viewBox="0 0 24 24"><path d="M7.5 6.5 Q12 2.5 21.5 2.5" fill="none" stroke="#555" stroke-width="0.9"/><path d="M6.5 9 Q2.5 13 2.5 21" fill="none" stroke="#555" stroke-width="0.9"/><rect x="4.5" y="3.5" width="6" height="6" fill="#8a8aff" stroke="#0a0aff" stroke-width="1.3"/><path d="M5.5 8.5 L9.5 4.5" stroke="#0a0aff" stroke-width="0.8"/><rect x="20" y="0.8" width="3.6" height="3.6" fill="#e8e8ff" stroke="#4a4aff" stroke-width="0.9"/><rect x="1" y="19.5" width="3.6" height="3.6" fill="#e8e8ff" stroke="#4a4aff" stroke-width="0.9"/><path d="M9.5 9.5 L22.5 18 L18 22 Z" fill="#000"/></svg>
<svg style="left:20px;top:200px;" width="24" height="24" viewBox="0 0 24 24"><defs><linearGradient id="gtw" x1="0" y1="0" x2="0" y2="1"><stop offset="0" stop-color="#5a5a5a"/><stop offset="0.55" stop-color="#8c8c8c"/><stop offset="1" stop-color="#c4c4c4"/></linearGradient></defs><path d="M3 14.5 Q7.5 14 9.5 8.5 Q11.5 1.8 16.5 1.8 Q21.3 1.8 21.8 6 Q21.6 8.6 19.6 7.6 Q17.3 5.2 15.2 6.6 Q13.2 8.8 14.6 11.8 Q16.2 14 19.5 13.8 H23.5 V22 H3.5 Z" fill="url(#gtw)"/><path d="M2 13.8 Q7.5 14 9.5 8.5 Q11.5 1.8 16.5 1.8 Q21.3 1.8 21.8 6 Q21.6 8.6 19.6 7.6 Q17.3 5.2 15.2 6.6 Q13.2 8.8 14.6 11.8 Q16.2 14 19.5 13.8 H23.5" fill="none" stroke="#111" stroke-width="1.3"/><path d="M10.8 8.5 Q12.5 3.2 16.5 3.2 Q19.5 3.2 20.2 5.6" fill="none" stroke="#fff" stroke-width="0.6" opacity="0.8"/></svg>
<svg style="left:20px;top:232px;" width="24" height="24" viewBox="0 0 24 24"><defs><linearGradient id="ghd" x1="0" y1="0" x2="1" y2="1"><stop offset="0" stop-color="#f6e23a"/><stop offset="1" stop-color="#f39a10"/></linearGradient></defs><path d="M15.5 15 L21.5 20.8" stroke="#6a4a08" stroke-width="5.2" stroke-linecap="round"/><path d="M15.5 15 L21.5 20.8" stroke="url(#ghd)" stroke-width="3.6" stroke-linecap="round"/><path d="M17 15.8 L21 19.6" stroke="#fff" stroke-width="0.7" stroke-dasharray="1 0.6" opacity="0.9"/><path d="M12.5 12 L15 14.5" stroke="#333" stroke-width="2.4"/><circle cx="9" cy="7.8" r="7" fill="url(#glens)" stroke="#111" stroke-width="1.4"/><path d="M4.5 6 Q6.5 3 10.5 3.2" fill="none" stroke="#fff" stroke-width="1.3" opacity="0.85"/></svg>
<svg style="left:20px;top:264px;" width="24" height="24" viewBox="0 0 24 24"><defs><linearGradient id="grc" x1="0" y1="0" x2="1" y2="1"><stop offset="0" stop-color="#f4f8fc"/><stop offset="1" stop-color="#86a9cc"/></linearGradient></defs><rect x="3.3" y="2.5" width="19" height="18.5" fill="url(#grc)" stroke="#000" stroke-width="1.3"/></svg>
<svg style="left:20px;top:296px;" width="24" height="24" viewBox="0 0 24 24"><defs><linearGradient id="gbl" x1="0" y1="0" x2="1" y2="1"><stop offset="0" stop-color="#5d5dae"/><stop offset="1" stop-color="#b9b9e6"/></linearGradient><linearGradient id="gbr" x1="0" y1="0" x2="1" y2="0"><stop offset="0" stop-color="#f4f4ff"/><stop offset="1" stop-color="#c8c8f0"/></linearGradient></defs><path d="M3.5 4.5 L14.5 0.5 L14.7 13.8 L4 17 Z" fill="url(#gbl)"/><path d="M14.5 0.5 L23 7.5 L23 19 L14.7 13.8 Z" fill="url(#gbr)"/><path d="M4 17 L14.7 13.8 L23 19 L12 23 Z" fill="#3c3c96"/><path d="M3.5 4.5 L14.5 0.5 L23 7.5 L23 19 L12 23 L4 17 Z" fill="none" stroke="#555" stroke-width="1"/></svg>
<svg style="left:20px;top:328px;" width="24" height="24" viewBox="0 0 24 24"><defs><linearGradient id="gci" x1="0.2" y1="0.1" x2="0.7" y2="1"><stop offset="0" stop-color="#ffffff"/><stop offset="1" stop-color="#ff98aa"/></linearGradient></defs><circle cx="13" cy="11.7" r="9.2" fill="url(#gci)" stroke="#222" stroke-width="1.2"/></svg>
<svg style="left:20px;top:360px;" width="24" height="24" viewBox="0 0 24 24"><defs><linearGradient id="gst" x1="0" y1="0" x2="1" y2="1"><stop offset="0" stop-color="#fffbe0"/><stop offset="1" stop-color="#f2de6a"/></linearGradient></defs><path d="M1.5 6 L8.5 1 L16.2 5.5 L14 15.5 L4.5 16 Z" fill="url(#gst)" stroke="#333" stroke-width="1"/><path d="M16.20 6.00 L18.55 11.56 L24.57 12.08 L20.00 16.04 L21.37 21.92 L16.20 18.80 L11.03 21.92 L12.40 16.04 L7.83 12.08 L13.85 11.56 Z" fill="url(#gst)" stroke="#333" stroke-width="1"/></svg>
<svg style="left:20px;top:392px;" width="24" height="24" viewBox="0 0 24 24"><path d="M11.73 11.79 L11.65 11.74 L11.57 11.68 L11.50 11.61 L11.44 11.52 L11.39 11.42 L11.35 11.31 L11.32 11.19 L11.31 11.06 L11.32 10.92 L11.34 10.78 L11.38 10.64 L11.44 10.50 L11.53 10.36 L11.63 10.23 L11.75 10.10 L11.89 9.99 L12.04 9.89 L12.22 9.81 L12.40 9.74 L12.60 9.70 L12.81 9.68 L13.03 9.68 L13.25 9.70 L13.47 9.75 L13.70 9.83 L13.92 9.93 L14.13 10.06 L14.33 10.22 L14.52 10.40 L14.69 10.61 L14.84 10.84 L14.97 11.09 L15.08 11.36 L15.15 11.64 L15.20 11.94 L15.21 12.25 L15.19 12.57 L15.14 12.88 L15.05 13.20 L14.93 13.51 L14.77 13.81 L14.58 14.10 L14.35 14.37 L14.09 14.63 L13.80 14.85 L13.48 15.05 L13.14 15.22 L12.77 15.35 L12.39 15.45 L11.99 15.50 L11.59 15.51 L11.17 15.48 L10.76 15.41 L10.35 15.29 L9.94 15.13 L9.55 14.92 L9.18 14.67 L8.83 14.38 L8.51 14.05 L8.22 13.68 L7.97 13.27 L7.76 12.84 L7.59 12.38 L7.47 11.90 L7.40 11.41 L7.38 10.90 L7.41 10.39 L7.50 9.87 L7.64 9.36 L7.83 8.86 L8.08 8.38 L8.39 7.92 L8.74 7.49 L9.14 7.10 L9.58 6.74 L10.06 6.43 L10.58 6.16 L11.13 5.95 L11.71 5.80 L12.30 5.70 L12.91 5.66 L13.52 5.69 L14.14 5.79 L14.75 5.94 L15.34 6.16 L15.92 6.45 L16.47 6.79 L16.99 7.20 L17.46 7.66 L17.90 8.17 L18.28 8.73 L18.60 9.33 L18.86 9.97 L19.06 10.64 L19.19 11.33 L19.25 12.04 L19.23 12.75 L19.14 13.47 L18.98 14.18 L18.74 14.88 L18.43 15.56 L18.04 16.20 L17.59 16.81 L17.07 17.37 L16.50 17.88 L15.87 18.34 L15.19 18.73 L14.46 19.05 L13.71 19.29 L12.92 19.46 L12.11 19.55 L11.29 19.56 L10.47 19.48 L9.66 19.31 L8.86 19.06 L8.08 18.73 L7.34 18.32 L6.63 17.83 L5.98 17.26 L5.38 16.63 L4.85 15.93 L4.39 15.17 L4.00 14.37 L3.70 13.52 L3.48 12.64 L3.35 11.74 L3.32 10.82 L3.38 9.90 L3.54 8.98 L3.79 8.07 L4.13 7.19 L4.57 6.35 L5.10 5.54 L5.70 4.79 L6.39 4.11 L7.15 3.49 L7.97 2.94 L8.86 2.49 L9.79 2.12 L10.76 1.85 L11.75 1.67 L12.77 1.60 L13.80 1.64 L14.82 1.78 L15.83 2.02 L16.82 2.38 L17.77 2.83 L18.68 3.38 L19.53 4.02 L20.31 4.76 L21.02 5.57 L21.65 6.46 L22.19 7.41 L22.62 8.42 L22.96 9.48 L23.19 10.57 L23.30 11.69 L23.30 12.81 L23.18 13.94 L22.95 15.06" fill="none" stroke="#222" stroke-width="1.25"/></svg>
<svg style="left:20px;top:424px;" width="24" height="24" viewBox="0 0 24 24"><defs><linearGradient id="gpc" x1="0" y1="0" x2="1" y2="0.3"><stop offset="0" stop-color="#fff06a"/><stop offset="1" stop-color="#f29a10"/></linearGradient></defs><path d="M2.2 1.6 Q5.5 1 7.2 2.2 L2.8 11.3 Q5.5 11.6 7.8 12.8 Q9.6 15 9.1 18.8 Q10.5 23 14.7 22.5 Q19.5 21.8 22.2 17.5" fill="none" stroke="#222" stroke-width="1"/><path d="M18 1.2 L24 4.8 L17.5 14.8 L11.6 11.4 Z" fill="url(#gpc)" stroke="#333" stroke-width="0.9"/><path d="M11.6 11.4 L17.5 14.8 L12.8 20.6 Z" fill="#fdf3d8" stroke="#333" stroke-width="0.8"/><path d="M12 18.6 L13.9 19.7 L12.8 20.8 Z" fill="#000"/></svg>
<svg style="left:20px;top:456px;" width="24" height="24" viewBox="0 0 24 24"><defs><linearGradient id="gpn" x1="0" y1="0" x2="1" y2="1"><stop offset="0" stop-color="#c8e0f4"/><stop offset="1" stop-color="#4f86b8"/></linearGradient></defs><path d="M2.8 0.8 H14.5" stroke="#222" stroke-width="0.9"/><path d="M3.4 1.2 Q9.5 6 9.5 12 Q9.5 17 8.8 20.5" fill="none" stroke="#222" stroke-width="0.9"/><rect x="1.6" y="19.6" width="3.6" height="3.6" fill="#fff" stroke="#111" stroke-width="1"/><path d="M5.2 21.4 H11.2" stroke="#111" stroke-width="0.9"/><circle cx="12.2" cy="21.6" r="1" fill="#fff" stroke="#111" stroke-width="0.8"/><path d="M17.5 0.5 L24.5 4 L21 10.2 L15.6 7.3 Z" fill="url(#gpn)" stroke="#333" stroke-width="0.8"/><path d="M15.6 7.3 L21 10.2 L19.8 13.2 L15 10.8 Z" fill="#f4c63c" stroke="#333" stroke-width="0.7"/><path d="M15 10.8 L19.8 13.2 L13 21.5 Z" fill="#dfe8f0" stroke="#333" stroke-width="0.8"/></svg>
<svg style="left:20px;top:488px;" width="24" height="24" viewBox="0 0 24 24"><defs><linearGradient id="gcn" x1="0" y1="0" x2="1" y2="1"><stop offset="0" stop-color="#fff2a0"/><stop offset="1" stop-color="#e0a010"/></linearGradient></defs><path d="M1 1.5 Q5.5 -0.5 8.5 1.8 Q5.5 4 5.8 9.5 Q6.2 15.5 11 18.5 Q13 19.6 16 19 Q20 18 24.5 19.6 Q20 19.4 16.5 21.2 Q12 23 8.5 21 Q3 17.5 2.6 10 Q2.5 5 1 1.5 Z" fill="#111"/><path d="M16.5 1.5 L24.6 3.2 L22.8 8 L15.6 6.3 Z" fill="#6aa0d0" stroke="#333" stroke-width="0.7"/><path d="M15.6 6.3 L22.8 8 L22.2 9.6 L15.2 8 Z" fill="#d82020"/><path d="M15.2 8 L22.2 9.6 L20.5 16 L12 21.5 L12.5 12 Z" fill="url(#gcn)" stroke="#222" stroke-width="0.9"/><path d="M17.3 11.3 L13 20" stroke="#222" stroke-width="0.9"/><circle cx="17.3" cy="11.5" r="0.9" fill="#222"/></svg>
<svg style="left:20px;top:520px;" width="24" height="24" viewBox="0 0 24 24"><defs><linearGradient id="gtx" x1="0" y1="0" x2="0.3" y2="1"><stop offset="0" stop-color="#000"/><stop offset="0.5" stop-color="#3a3a3a"/><stop offset="1" stop-color="#000"/></linearGradient></defs><path d="M1.8 21 L8.8 1.6 H14.2 L21 21 H16.2 L14.8 16.8 H8.2 L6.7 21 Z M9.4 13.2 H13.6 L11.5 6.8 Z" fill="url(#gtx)"/><path d="M21.6 1.5 V21.5 M20 1.5 H23.2 M20 21.5 H23.2" stroke="#222" stroke-width="0.9"/></svg>
<svg style="left:20px;top:552px;" width="24" height="24" viewBox="0 0 24 24"><defs><linearGradient id="gsp" x1="0" y1="0" x2="1" y2="0.4"><stop offset="0" stop-color="#2f8a1a"/><stop offset="0.6" stop-color="#6cc040"/><stop offset="0.8" stop-color="#d8f4c8"/><stop offset="1" stop-color="#4da02a"/></linearGradient></defs><circle cx="4" cy="2.8" r="1" fill="#111"/><circle cx="3.2" cy="6.5" r="1.1" fill="#111"/><circle cx="4.8" cy="10.8" r="1.1" fill="#111"/><circle cx="7.5" cy="4.5" r="0.7" fill="#333"/><circle cx="7" cy="8.5" r="0.8" fill="#333"/><circle cx="10" cy="6.2" r="0.6" fill="#777"/><circle cx="9.5" cy="9.5" r="0.6" fill="#777"/><circle cx="12" cy="7.8" r="0.5" fill="#999"/><path d="M13.2 7.5 Q13 5 15.5 5 Q18 5.2 18.2 7.8" fill="#fff" stroke="#222" stroke-width="1"/><path d="M12.5 9 L19.5 9.5 L24.8 20.5 Q24 23 20 22.5 L12.5 19.5 Q11.2 14 12.5 9 Z" fill="url(#gsp)" stroke="#1d5a10" stroke-width="0.9"/><path d="M12.6 9 L19.4 9.5 L19.9 11.4 L12.3 11 Z" fill="#f0b828" stroke="#6a4a08" stroke-width="0.6"/></svg>
<svg style="left:20px;top:584px;" width="24" height="24" viewBox="0 0 24 24"><defs><linearGradient id="ger" x1="0" y1="0" x2="0" y2="1"><stop offset="0" stop-color="#fdf0ea"/><stop offset="1" stop-color="#eea88a"/></linearGradient></defs><path d="M12.8 0.6 L22.1 6.1 L11.6 21.8 L2.8 16.7 Z" fill="url(#ger)" stroke="#111" stroke-width="1.1"/></svg>
<svg style="left:20px;top:616px;" width="24" height="24" viewBox="0 0 24 24"><defs><linearGradient id="gbk" x1="0" y1="0" x2="1" y2="1"><stop offset="0" stop-color="#d8ecf8"/><stop offset="1" stop-color="#3f78ac"/></linearGradient><linearGradient id="gpd" x1="0" y1="0" x2="0" y2="1"><stop offset="0" stop-color="#e8f8e8"/><stop offset="1" stop-color="#6cc06c"/></linearGradient></defs><ellipse cx="11.6" cy="21.4" rx="10.4" ry="2.4" fill="url(#gpd)" stroke="#2c7a2c" stroke-width="0.8"/><path d="M5 6.5 Q3 13 9 19.5 L13 20 Q9 15 9.5 11 Z" fill="#6cc06c" stroke="#2c7a2c" stroke-width="0.7"/><path d="M5 6.5 L19.5 2 L24 14 L10.5 18.5 Z" fill="url(#gbk)" stroke="#111" stroke-width="1"/><ellipse cx="12.2" cy="4.2" rx="7.4" ry="2.3" transform="rotate(-17 12.2 4.2)" fill="#bcdcf0" stroke="#111" stroke-width="0.9"/><path d="M7.5 4.5 Q8 -0.5 10 0.5 L11 9.5" fill="none" stroke="#333" stroke-width="0.9"/><circle cx="11" cy="10" r="1" fill="#fff" stroke="#111" stroke-width="0.7"/></svg>
<svg style="left:20px;top:648px;" width="24" height="24" viewBox="0 0 24 24"><defs><linearGradient id="ggr" x1="0" y1="1" x2="1" y2="0"><stop offset="0" stop-color="#ffffff"/><stop offset="0.45" stop-color="#d6efd6"/><stop offset="1" stop-color="#3c9e3c"/></linearGradient></defs><rect x="2" y="1" width="21.8" height="21.8" fill="url(#ggr)"/><rect x="2" y="1" width="21.8" height="21.8" fill="none" stroke="#5fb55f" stroke-width="1"/><path d="M6.5 6.5 L19 17" stroke="#333" stroke-width="1.1"/><rect x="4.5" y="4.5" width="4" height="4" rx="0.8" fill="#fff" stroke="#222" stroke-width="1.3"/><rect x="17" y="15" width="4" height="4" rx="0.8" fill="#fff" stroke="#222" stroke-width="1.3"/></svg>
<svg style="left:20px;top:680px;" width="24" height="24" viewBox="0 0 24 24"><defs><linearGradient id="gdr" x1="0" y1="0" x2="1" y2="1"><stop offset="0" stop-color="#e8f2fa"/><stop offset="1" stop-color="#5f8fc0"/></linearGradient></defs><path d="M6.6 16.6 L16 7.4 L17.6 9 L8.2 18.2 Q7 18.6 6.6 17.8 Z" fill="url(#gdr)" stroke="#1a2a3a" stroke-width="0.9"/><path d="M14.4 7.6 L18.2 11.4" stroke="#000" stroke-width="2.6" stroke-linecap="round"/><ellipse cx="20.2" cy="4.4" rx="4.6" ry="3.3" transform="rotate(-45 20.2 4.4)" fill="#111"/><ellipse cx="19.5" cy="3.6" rx="1.6" ry="0.8" transform="rotate(-45 19.5 3.6)" fill="#777"/><ellipse cx="6.5" cy="21.5" rx="1.4" ry="1.9" fill="#8ab0d8" stroke="#1a2a3a" stroke-width="0.8"/></svg>
<svg style="left:20px;top:712px;" width="24" height="24" viewBox="0 0 24 24"><defs><linearGradient id="gcb" x1="0" y1="0" x2="1" y2="1"><stop offset="0" stop-color="#e4eef8"/><stop offset="1" stop-color="#9ab8d8"/></linearGradient></defs><path d="M14.7 2.9 L20.9 7.2 V16.3 M7.5 8.6 L5.1 15.3" fill="none" stroke="#111" stroke-width="1.3"/><rect x="6" y="0.5" width="8.7" height="7" fill="url(#gcb)" stroke="#111" stroke-width="1.3"/><rect x="7.6" y="9.2" width="8" height="5" fill="#f6cc30" stroke="#111" stroke-width="1.2"/><rect x="1.3" y="16.3" width="8.1" height="7" fill="url(#gcb)" stroke="#111" stroke-width="1.3"/><rect x="16.1" y="16.3" width="8.4" height="7" fill="url(#gcb)" stroke="#111" stroke-width="1.3"/></svg>
<div style="left:927px;top:145px;width:15px;height:783px;border:1px solid #c4c4c4;background:linear-gradient(90deg,#e4e4e4,#fbfbfb 45%,#f1f1f1 70%,#dedede);"></div>
<div style="left:928px;top:161px;width:13px;height:749px;border-radius:7px;background:linear-gradient(90deg,#d2d2d2,#f7f7f7 40%,#f2f2f2 65%,#cfcfcf);box-shadow:inset 0 4px 4px -2px rgba(0,0,0,0.12),inset 0 -4px 4px -2px rgba(0,0,0,0.12);"></div>
<svg style="left:928px;top:149px;" width="13" height="9" viewBox="0 0 13 9"><path d="M2.5 8 L6.5 2 L10.5 8 Z" fill="#3a3a3a"/></svg>
<svg style="left:928px;top:914px;" width="13" height="9" viewBox="0 0 13 9"><path d="M2.5 1 L6.5 7 L10.5 1 Z" fill="#3a3a3a"/></svg>
<div style="left:928px;top:392px;width:13px;height:285px;border:1px solid #2a3a50;border-left-color:#1c2e48;border-radius:7px;background:linear-gradient(90deg,#c6ced8 0%,#cdd4dc 35%,#8e9eb2 45%,#b8c8d8 60%,#e4eef8 100%);box-shadow:inset 0 8px 6px -4px rgba(20,40,70,0.6),inset 0 -8px 6px -4px rgba(20,40,70,0.6);"></div>
<div style="left:65px;top:932px;width:858px;height:15px;border:1px solid #c4c4c4;background:linear-gradient(#e4e4e4,#fbfbfb 45%,#f1f1f1 70%,#dedede);"></div>
<div style="left:81px;top:933px;width:826px;height:13px;border-radius:7px;background:linear-gradient(#d2d2d2,#f7f7f7 40%,#f2f2f2 65%,#cfcfcf);box-shadow:inset 4px 0 4px -2px rgba(0,0,0,0.12),inset -4px 0 4px -2px rgba(0,0,0,0.12);"></div>
<svg style="left:69px;top:933px;" width="9" height="13" viewBox="0 0 9 13"><path d="M7 2.5 L1 6.5 L7 10.5 Z" fill="#3a3a3a"/></svg>
<svg style="left:910px;top:933px;" width="9" height="13" viewBox="0 0 9 13"><path d="M1 2.5 L8 6.5 L1 10.5 Z" fill="#3a3a3a"/></svg>
<div style="left:321px;top:933px;width:341px;height:13px;border:1px solid #2a3a50;border-top-color:#1c2e48;border-bottom-color:#50555e;border-radius:7px;background:linear-gradient(#c6ced8 0%,#cdd4dc 35%,#8e9eb2 45%,#b8c8d8 60%,#e4eef8 100%);box-shadow:inset 8px 0 6px -4px rgba(20,40,70,0.6),inset -8px 0 6px -4px rgba(20,40,70,0.6);"></div>
<svg style="left:925px;top:124px;" width="18" height="18" viewBox="0 0 18 18"><path d="M11.5 11.5 L16 16" stroke="#222" stroke-width="2.4" stroke-linecap="round"/><circle cx="8" cy="8" r="6.3" fill="url(#glensg)" stroke="#333" stroke-width="1.3"/><text x="8" y="10.3" font-size="6.3" font-weight="bold" text-anchor="middle" fill="#444" font-family="Liberation Sans">1:1</text></svg>
<svg style="left:927px;top:931px;" width="16" height="18" viewBox="0 0 16 18"><defs><linearGradient id="gct" x1="0" y1="0" x2="1" y2="1"><stop offset="0" stop-color="#d4dad4"/><stop offset="1" stop-color="#f2eef2"/></linearGradient></defs><path d="M1.5 1 L14.5 9.5 L2.5 17 Z" fill="url(#gct)" stroke="#c8c8c8" stroke-width="0.6"/></svg>
<svg style="left:948px;top:513px;" width="5" height="48" viewBox="0 0 5 48"><rect x="0" y="0" width="1" height="1" fill="#b5b5b5"/><rect x="3" y="0" width="1" height="1" fill="#b5b5b5"/><rect x="0" y="3" width="1" height="1" fill="#b5b5b5"/><rect x="3" y="3" width="1" height="1" fill="#b5b5b5"/><rect x="0" y="6" width="1" height="1" fill="#b5b5b5"/><rect x="3" y="6" width="1" height="1" fill="#b5b5b5"/><rect x="0" y="9" width="1" height="1" fill="#b5b5b5"/><rect x="3" y="9" width="1" height="1" fill="#b5b5b5"/><rect x="0" y="12" width="1" height="1" fill="#b5b5b5"/><rect x="3" y="12" width="1" height="1" fill="#b5b5b5"/><rect x="0" y="15" width="1" height="1" fill="#b5b5b5"/><rect x="3" y="15" width="1" height="1" fill="#b5b5b5"/><rect x="0" y="18" width="1" height="1" fill="#b5b5b5"/><rect x="3" y="18" width="1" height="1" fill="#b5b5b5"/><rect x="0" y="21" width="1" height="1" fill="#b5b5b5"/><rect x="3" y="21" width="1" height="1" fill="#b5b5b5"/><rect x="0" y="24" width="1" height="1" fill="#b5b5b5"/><rect x="3" y="24" width="1" height="1" fill="#b5b5b5"/><rect x="0" y="27" width="1" height="1" fill="#b5b5b5"/><rect x="3" y="27" width="1" height="1" fill="#b5b5b5"/><rect x="0" y="30" width="1" height="1" fill="#b5b5b5"/><rect x="3" y="30" width="1" height="1" fill="#b5b5b5"/><rect x="0" y="33" width="1" height="1" fill="#b5b5b5"/><rect x="3" y="33" width="1" height="1" fill="#b5b5b5"/><rect x="0" y="36" width="1" height="1" fill="#b5b5b5"/><rect x="3" y="36" width="1" height="1" fill="#b5b5b5"/><rect x="0" y="39" width="1" height="1" fill="#b5b5b5"/><rect x="3" y="39" width="1" height="1" fill="#b5b5b5"/><rect x="0" y="42" width="1" height="1" fill="#b5b5b5"/><rect x="3" y="42" width="1" height="1" fill="#b5b5b5"/><rect x="0" y="45" width="1" height="1" fill="#b5b5b5"/><rect x="3" y="45" width="1" height="1" fill="#b5b5b5"/></svg>
<div style="left:954px;top:120px;width:354px;height:832px;background:#f2f2f2;border-left:1px solid #b9b9b9;border-right:1px solid #c4c4c4;border-bottom:1px solid #b9b9b9;"></div>
<div style="left:955px;top:121px;width:350px;height:25px;background:#aaaaaa;border-top:1px solid #9c9c9c;"></div>
<svg style="left:959px;top:124px;" width="18" height="20" viewBox="0 0 18 20"><path d="M1.5 2 H15.5 L4 18 H1.5 Z" fill="#fff" stroke="#000" stroke-width="1.4"/><path d="M2.5 18.5 L12.5 7 L15.5 9.5 L5 18.5 Z" fill="#111"/><path d="M13 6 L17 3.5 L16 9 Z" fill="#f0b81a"/></svg>
<span class="t" style="left:977px;top:127px;font-size:14.4px;color:#000;">Fill and Stroke (Shift+Ctrl+F)</span>
<svg style="left:1264px;top:128px;" width="13" height="13" viewBox="0 0 13 13"><rect x="1" y="1" width="11" height="11" rx="2.5" fill="none" stroke="#444" stroke-width="1.1"/><path d="M4 3.5 L9.5 6.5 L4 9.5 Z" fill="#444"/></svg>
<svg style="left:1287px;top:128px;" width="13" height="13" viewBox="0 0 13 13"><rect x="1" y="1" width="11" height="11" rx="2.5" fill="none" stroke="#444" stroke-width="1.1"/><path d="M3.8 3.8 L9.2 9.2 M9.2 3.8 L3.8 9.2" stroke="#333" stroke-width="2"/></svg>
<div style="left:955px;top:146px;width:351px;height:437px;background:#f2f2f2;border-top:1px solid #fff;border-left:1px solid #fff;border-right:1px solid #c3c3c3;border-bottom:1px solid #b9b9b9;"></div>
<div style="left:960px;top:179px;width:341px;height:303px;background:#ededed;border:1px solid #b5b5b5;border-radius:0 3px 3px 3px;"></div>
<div style="left:961px;top:154px;width:42px;height:26px;background:linear-gradient(#dadada,#cfcfcf);border:1px solid #b5b5b5;border-bottom:none;border-radius:4px 4px 0 0;"></div>
<div style="left:1107px;top:154px;width:102px;height:26px;background:linear-gradient(#dadada,#cfcfcf);border:1px solid #b5b5b5;border-bottom:none;border-radius:4px 4px 0 0;"></div>
<div style="left:1002px;top:152px;width:106px;height:29px;background:#ededed;border:1px solid #b5b5b5;border-bottom:none;border-radius:4px 4px 0 0;border-top:2px solid #7d96b9;"></div>
<svg style="left:965px;top:159px;" width="16" height="17" viewBox="0 0 16 17"><defs><linearGradient id="gft" x1="0" y1="0" x2="1" y2="1"><stop offset="0" stop-color="#98b6dc"/><stop offset="1" stop-color="#eef3f9"/></linearGradient></defs><rect x="0" y="0" width="16" height="17" fill="url(#gft)"/></svg>
<span class="t" style="left:982px;top:161px;font-size:13.6px;">Fill</span>
<svg style="left:1006px;top:157px;" width="17" height="17" viewBox="0 0 17 17"><rect x="1" y="1" width="14" height="14" fill="#f6f6f6" stroke="#555" stroke-width="1"/><rect x="2" y="2" width="14" height="14" fill="none" stroke="#bbb" stroke-width="0.8" opacity="0.6"/></svg>
<span class="t" style="left:1025px;top:160px;font-size:14px;">Stroke <span class="u">p</span>aint</span>
<svg style="left:1111px;top:159px;" width="18" height="18" viewBox="0 0 18 18"><path d="M1 5 H14" stroke="#222" stroke-width="1.6"/><path d="M12 1.5 L17 5 L12 8.5 Z" fill="#222"/><path d="M1 10 H16" stroke="#222" stroke-width="1.3" stroke-dasharray="2 1.2"/><path d="M1 15 H16" stroke="#222" stroke-width="1.8"/></svg>
<span class="t" style="left:1128px;top:160px;font-size:14px;">Stroke st<span class="u">y</span>le</span>
<svg style="left:976px;top:195px;" width="12" height="12" viewBox="0 0 12 12"><path d="M2 2 L10 10 M10 2 L2 10" stroke="#111" stroke-width="2.4"/></svg>
<div style="left:997px;top:188px;width:26px;height:26px;border:1px solid #9c9c9c;border-radius:4px;background:linear-gradient(#d9d9d9,#cacaca);"></div>
<svg style="left:1001px;top:192px;" width="18" height="18" viewBox="0 0 18 18"><rect x="1" y="1" width="16" height="16" fill="#99b4d6" stroke="#222" stroke-width="1.4"/></svg>
<svg style="left:1029px;top:192px;" width="18" height="18" viewBox="0 0 18 18"><defs><linearGradient id="glg" x1="0" y1="0.3" x2="1" y2="0.7"><stop offset="0" stop-color="#96b3d6"/><stop offset="1" stop-color="#ffffff"/></linearGradient></defs><rect x="1" y="1" width="16" height="16" fill="url(#glg)" stroke="#222" stroke-width="1.2"/></svg>
<svg style="left:1057px;top:192px;" width="18" height="18" viewBox="0 0 18 18"><defs><radialGradient id="grg"><stop offset="0" stop-color="#ffffff"/><stop offset="1" stop-color="#96b3d6"/></radialGradient></defs><rect x="1" y="1" width="16" height="16" fill="url(#grg)" stroke="#222" stroke-width="1.2"/></svg>
<svg style="left:1085px;top:192px;" width="18" height="18" viewBox="0 0 18 18"><rect x="1" y="1" width="16" height="16" fill="#9cb6d8" stroke="#222" stroke-width="1.2"/><circle cx="5" cy="5" r="2.6" fill="#fff"/><circle cx="13" cy="5" r="2.6" fill="#fff"/><circle cx="9" cy="9" r="2.6" fill="#fff"/><circle cx="5" cy="13" r="2.6" fill="#fff"/><circle cx="13" cy="13" r="2.6" fill="#fff"/></svg>
<svg style="left:1113px;top:192px;" width="18" height="18" viewBox="0 0 18 18"><rect x="1" y="1" width="16" height="16" fill="#9cb6d8" stroke="#222" stroke-width="1.2"/><rect x="3" y="3" width="12" height="12" fill="#fff"/></svg>
<span class="t" style="left:1143px;top:192px;font-size:18px;font-weight:bold;">?</span>
<div style="left:964px;top:229px;width:332px;height:248px;border:1px solid #bdbdbd;border-radius:3px;box-shadow:inset 1px 1px 0 #fff;"></div>
<div style="left:967px;top:221px;width:63px;height:14px;background:#ededed;"></div>
<span class="t" style="left:969px;top:221px;font-size:13.6px;letter-spacing:0.25px;color:#222;">Flat color</span>
<div style="left:970px;top:264px;width:321px;height:186px;background:#ededed;border:1px solid #b5b5b5;border-radius:0 3px 3px 3px;"></div>
<div style="left:1008px;top:240px;width:37px;height:25px;background:linear-gradient(#dadada,#cfcfcf);border:1px solid #b5b5b5;border-bottom:none;border-radius:4px 4px 0 0;"></div>
<span class="t" style="left:1013px;top:246px;font-size:14px;color:#222;">HSL</span>
<div style="left:1044px;top:240px;width:46px;height:25px;background:linear-gradient(#dadada,#cfcfcf);border:1px solid #b5b5b5;border-bottom:none;border-radius:4px 4px 0 0;"></div>
<span class="t" style="left:1049px;top:246px;font-size:14px;color:#222;">CMYK</span>
<div style="left:1089px;top:240px;width:49px;height:25px;background:linear-gradient(#dadada,#cfcfcf);border:1px solid #b5b5b5;border-bottom:none;border-radius:4px 4px 0 0;"></div>
<span class="t" style="left:1094px;top:246px;font-size:14px;color:#222;">Wheel</span>
<div style="left:1137px;top:240px;width:40px;height:25px;background:linear-gradient(#dadada,#cfcfcf);border:1px solid #b5b5b5;border-bottom:none;border-radius:4px 4px 0 0;"></div>
<span class="t" style="left:1142px;top:246px;font-size:14px;color:#222;">CMS</span>
<div style="left:970px;top:237px;width:39px;height:29px;background:#ededed;border:1px solid #b5b5b5;border-bottom:none;border-radius:4px 4px 0 0;border-top:2px solid #7d96b9;"></div>
<span class="t" style="left:975px;top:245px;font-size:14px;">RGB</span>
<span class="t" style="left:977px;top:274px;font-size:13.5px;color:#222;"><span class="u">R</span></span>
<div style="left:994px;top:267px;width:227px;height:27px;border:1px solid #8d8d8d;box-shadow:inset 0 0 0 1px #f4f4f4;background:linear-gradient(90deg,#00065e,#ff065e);"></div>
<svg style="left:992px;top:267px;" width="9" height="27" viewBox="0 0 9 27"><path d="M1.0 0.5 H7.0 L4.0 4 Z" fill="#000"/><path d="M1.0 26.5 H7.0 L4.0 23 Z" fill="#000"/></svg>
<div style="left:1230px;top:268px;width:54px;height:25px;border:1px solid #8f8f8f;border-radius:4px;background:#fff;"></div>
<div style="left:1269px;top:269px;width:14px;height:23px;background:linear-gradient(#f4f4f4,#e2e2e2);border-left:1px solid #b8b8b8;border-radius:0 3px 3px 0;"></div>
<div style="left:1271px;top:280px;width:10px;height:1px;background:#c8c8c8;"></div>
<svg style="left:1271px;top:271px;" width="10" height="8" viewBox="0 0 10 8"><path d="M1.5 6 L5 2.5 L8.5 6" fill="none" stroke="#222" stroke-width="1.4"/></svg>
<svg style="left:1271px;top:282px;" width="10" height="8" viewBox="0 0 10 8"><path d="M1.5 2 L5 5.5 L8.5 2" fill="none" stroke="#bdbdbd" stroke-width="1.4"/></svg>
<span class="t" style="left:1235px;top:274px;font-size:13px;">0</span>
<span class="t" style="left:977px;top:303px;font-size:13.5px;color:#222;"><span class="u">G</span></span>
<div style="left:994px;top:296px;width:227px;height:27px;border:1px solid #8d8d8d;box-shadow:inset 0 0 0 1px #f4f4f4;background:linear-gradient(90deg,#00005e,#00ff5e);"></div>
<svg style="left:997px;top:296px;" width="9" height="27" viewBox="0 0 9 27"><path d="M1.2470588235294144 0.5 H7.247058823529414 L4.247058823529414 4 Z" fill="#000"/><path d="M1.2470588235294144 26.5 H7.247058823529414 L4.247058823529414 23 Z" fill="#000"/></svg>
<div style="left:1230px;top:297px;width:54px;height:25px;border:1px solid #8f8f8f;border-radius:4px;background:#fff;"></div>
<div style="left:1269px;top:298px;width:14px;height:23px;background:linear-gradient(#f4f4f4,#e2e2e2);border-left:1px solid #b8b8b8;border-radius:0 3px 3px 0;"></div>
<div style="left:1271px;top:309px;width:10px;height:1px;background:#c8c8c8;"></div>
<svg style="left:1271px;top:300px;" width="10" height="8" viewBox="0 0 10 8"><path d="M1.5 6 L5 2.5 L8.5 6" fill="none" stroke="#222" stroke-width="1.4"/></svg>
<svg style="left:1271px;top:311px;" width="10" height="8" viewBox="0 0 10 8"><path d="M1.5 2 L5 5.5 L8.5 2" fill="none" stroke="#222" stroke-width="1.4"/></svg>
<span class="t" style="left:1235px;top:303px;font-size:13px;">6</span>
<span class="t" style="left:977px;top:332px;font-size:13.5px;color:#222;"><span class="u">B</span></span>
<div style="left:994px;top:325px;width:227px;height:27px;border:1px solid #8d8d8d;box-shadow:inset 0 0 0 1px #f4f4f4;background:linear-gradient(90deg,#000600,#0006ff);"></div>
<svg style="left:1074px;top:325px;" width="9" height="27" viewBox="0 0 9 27"><path d="M1.2039215686274929 0.5 H7.203921568627493 L4.203921568627493 4 Z" fill="#000"/><path d="M1.2039215686274929 26.5 H7.203921568627493 L4.203921568627493 23 Z" fill="#000"/></svg>
<div style="left:1230px;top:326px;width:54px;height:25px;border:1px solid #8f8f8f;border-radius:4px;background:#fff;"></div>
<div style="left:1269px;top:327px;width:14px;height:23px;background:linear-gradient(#f4f4f4,#e2e2e2);border-left:1px solid #b8b8b8;border-radius:0 3px 3px 0;"></div>
<div style="left:1271px;top:338px;width:10px;height:1px;background:#c8c8c8;"></div>
<svg style="left:1271px;top:329px;" width="10" height="8" viewBox="0 0 10 8"><path d="M1.5 6 L5 2.5 L8.5 6" fill="none" stroke="#222" stroke-width="1.4"/></svg>
<svg style="left:1271px;top:340px;" width="10" height="8" viewBox="0 0 10 8"><path d="M1.5 2 L5 5.5 L8.5 2" fill="none" stroke="#222" stroke-width="1.4"/></svg>
<span class="t" style="left:1235px;top:332px;font-size:13px;">94</span>
<span class="t" style="left:977px;top:361px;font-size:13.5px;color:#222;"><span class="u">A</span></span>
<div style="left:994px;top:354px;width:227px;height:27px;border:1px solid #8d8d8d;box-shadow:inset 0 0 0 1px #f4f4f4;background:linear-gradient(90deg,rgba(0,6,94,0),rgba(0,6,94,1)),repeating-conic-gradient(#595959 0 25%,#9a9a9a 0 50%) 0 0/16px 16px;"></div>
<svg style="left:1215px;top:354px;" width="9" height="27" viewBox="0 0 9 27"><path d="M1.0 0.5 H7.0 L4.0 4 Z" fill="#000"/><path d="M1.0 26.5 H7.0 L4.0 23 Z" fill="#000"/></svg>
<div style="left:1230px;top:355px;width:54px;height:25px;border:1px solid #8f8f8f;border-radius:4px;background:#fff;"></div>
<div style="left:1269px;top:356px;width:14px;height:23px;background:linear-gradient(#f4f4f4,#e2e2e2);border-left:1px solid #b8b8b8;border-radius:0 3px 3px 0;"></div>
<div style="left:1271px;top:367px;width:10px;height:1px;background:#c8c8c8;"></div>
<svg style="left:1271px;top:358px;" width="10" height="8" viewBox="0 0 10 8"><path d="M1.5 6 L5 2.5 L8.5 6" fill="none" stroke="#bdbdbd" stroke-width="1.4"/></svg>
<svg style="left:1271px;top:369px;" width="10" height="8" viewBox="0 0 10 8"><path d="M1.5 2 L5 5.5 L8.5 2" fill="none" stroke="#222" stroke-width="1.4"/></svg>
<span class="t" style="left:1235px;top:361px;font-size:13px;">255</span>
<div style="left:1230px;top:355px;width:40px;height:25px;border:1px solid #6f86a6;border-radius:4px 0 0 4px;border-right:none;"></div>
<div style="left:1259px;top:360px;width:1px;height:16px;background:#000;"></div>
<div style="left:972px;top:452px;width:16px;height:23px;background:#e4e4e4;"></div>
<svg style="left:972px;top:454px;" width="16" height="20" viewBox="0 0 16 20"><defs><linearGradient id="gtri" x1="0" y1="0" x2="1" y2="1"><stop offset="0" stop-color="#a8bca8"/><stop offset="0.5" stop-color="#e8e8e8"/><stop offset="1" stop-color="#b8a4b8"/></linearGradient></defs><path d="M2.5 2.5 Q2 2 3 2.5 L15 12 L5 17.5 Q4 18 3.8 17 Z" fill="url(#gtri)" stroke="#c8c8c8" stroke-width="0.5"/></svg>
<div style="left:992px;top:452px;width:16px;height:23px;background:#e4e4e4;"></div>
<svg style="left:991px;top:455px;" width="17" height="17" viewBox="0 0 17 17"><circle cx="8.5" cy="8.5" r="5.6" fill="none" stroke="#c2bcbc" stroke-width="5"/></svg>
<span class="t" style="left:1188px;top:457px;font-size:12px;color:#111;">RGBA<span class="u">:</span></span>
<div style="left:1226px;top:453px;width:64px;height:21px;border:1px solid #8f8f8f;border-radius:3px;background:#fff;"></div>
<span class="t" style="left:1230px;top:457px;font-size:12.6px;letter-spacing:0.2px;">00065eff</span>
<span class="t" style="left:964px;top:486px;font-size:13.6px;letter-spacing:0.5px;color:#111;">B<span class="u">l</span>ur:</span>
<div style="left:967px;top:512px;width:265px;height:5px;background:#d4d4d4;border:1px solid #bcbcbc;border-radius:2px;"></div>
<div style="left:967px;top:508px;width:29px;height:13px;border:1px solid #8f8f8f;border-radius:4px;background:linear-gradient(90deg,#f8f8f8 0,#f8f8f8 22%,#e6e6e6 24%,#f1f1f1 50%,#e6e6e6 76%,#f8f8f8 78%);"></div>
<div style="left:1236px;top:502px;width:64px;height:25px;border:1px solid #8f8f8f;border-radius:4px;background:#fff;"></div>
<div style="left:1285px;top:503px;width:14px;height:23px;background:linear-gradient(#f4f4f4,#e2e2e2);border-left:1px solid #b8b8b8;border-radius:0 3px 3px 0;"></div>
<svg style="left:1287px;top:505px;" width="10" height="8" viewBox="0 0 10 8"><path d="M1.5 6 L5 2.5 L8.5 6" fill="none" stroke="#222" stroke-width="1.4"/></svg>
<svg style="left:1287px;top:516px;" width="10" height="8" viewBox="0 0 10 8"><path d="M1.5 2 L5 5.5 L8.5 2" fill="none" stroke="#bdbdbd" stroke-width="1.4"/></svg>
<span class="t" style="left:1241px;top:508px;font-size:13px;">0.0</span>
<svg style="left:978px;top:512px;" width="8" height="6" viewBox="0 0 8 6"><rect x="0" y="0" width="1" height="1" fill="#bdbdbd"/><rect x="2" y="0" width="1" height="1" fill="#bdbdbd"/><rect x="4" y="0" width="1" height="1" fill="#bdbdbd"/><rect x="6" y="0" width="1" height="1" fill="#bdbdbd"/><rect x="0" y="2" width="1" height="1" fill="#bdbdbd"/><rect x="2" y="2" width="1" height="1" fill="#bdbdbd"/><rect x="4" y="2" width="1" height="1" fill="#bdbdbd"/><rect x="6" y="2" width="1" height="1" fill="#bdbdbd"/><rect x="0" y="4" width="1" height="1" fill="#bdbdbd"/><rect x="2" y="4" width="1" height="1" fill="#bdbdbd"/><rect x="4" y="4" width="1" height="1" fill="#bdbdbd"/><rect x="6" y="4" width="1" height="1" fill="#bdbdbd"/></svg>
<svg style="left:1210px;top:560px;" width="8" height="6" viewBox="0 0 8 6"><rect x="0" y="0" width="1" height="1" fill="#bdbdbd"/><rect x="2" y="0" width="1" height="1" fill="#bdbdbd"/><rect x="4" y="0" width="1" height="1" fill="#bdbdbd"/><rect x="6" y="0" width="1" height="1" fill="#bdbdbd"/><rect x="0" y="2" width="1" height="1" fill="#bdbdbd"/><rect x="2" y="2" width="1" height="1" fill="#bdbdbd"/><rect x="4" y="2" width="1" height="1" fill="#bdbdbd"/><rect x="6" y="2" width="1" height="1" fill="#bdbdbd"/><rect x="0" y="4" width="1" height="1" fill="#bdbdbd"/><rect x="2" y="4" width="1" height="1" fill="#bdbdbd"/><rect x="4" y="4" width="1" height="1" fill="#bdbdbd"/><rect x="6" y="4" width="1" height="1" fill="#bdbdbd"/></svg>
<span class="t" style="left:964px;top:534px;font-size:13.6px;letter-spacing:0.45px;color:#111;">Opacity, %</span>
<div style="left:967px;top:560px;width:258px;height:5px;background:#d4d4d4;border:1px solid #bcbcbc;border-radius:2px;"></div>
<div style="left:1199px;top:556px;width:29px;height:13px;border:1px solid #8f8f8f;border-radius:4px;background:linear-gradient(90deg,#f8f8f8 0,#f8f8f8 22%,#e6e6e6 24%,#f1f1f1 50%,#e6e6e6 76%,#f8f8f8 78%);"></div>
<div style="left:1236px;top:550px;width:64px;height:25px;border:1px solid #8f8f8f;border-radius:4px;background:#fff;"></div>
<div style="left:1285px;top:551px;width:14px;height:23px;background:linear-gradient(#f4f4f4,#e2e2e2);border-left:1px solid #b8b8b8;border-radius:0 3px 3px 0;"></div>
<svg style="left:1287px;top:553px;" width="10" height="8" viewBox="0 0 10 8"><path d="M1.5 6 L5 2.5 L8.5 6" fill="none" stroke="#bdbdbd" stroke-width="1.4"/></svg>
<svg style="left:1287px;top:564px;" width="10" height="8" viewBox="0 0 10 8"><path d="M1.5 2 L5 5.5 L8.5 2" fill="none" stroke="#222" stroke-width="1.4"/></svg>
<span class="t" style="left:1240px;top:556px;font-size:13px;">100.0</span>
<svg style="left:1107px;top:585px;" width="48" height="5" viewBox="0 0 48 5"><rect x="0" y="0" width="1" height="1" fill="#b8b8b8"/><rect x="3" y="0" width="1" height="1" fill="#b8b8b8"/><rect x="6" y="0" width="1" height="1" fill="#b8b8b8"/><rect x="9" y="0" width="1" height="1" fill="#b8b8b8"/><rect x="12" y="0" width="1" height="1" fill="#b8b8b8"/><rect x="15" y="0" width="1" height="1" fill="#b8b8b8"/><rect x="18" y="0" width="1" height="1" fill="#b8b8b8"/><rect x="21" y="0" width="1" height="1" fill="#b8b8b8"/><rect x="24" y="0" width="1" height="1" fill="#b8b8b8"/><rect x="27" y="0" width="1" height="1" fill="#b8b8b8"/><rect x="30" y="0" width="1" height="1" fill="#b8b8b8"/><rect x="33" y="0" width="1" height="1" fill="#b8b8b8"/><rect x="36" y="0" width="1" height="1" fill="#b8b8b8"/><rect x="39" y="0" width="1" height="1" fill="#b8b8b8"/><rect x="42" y="0" width="1" height="1" fill="#b8b8b8"/><rect x="45" y="0" width="1" height="1" fill="#b8b8b8"/><rect x="0" y="3" width="1" height="1" fill="#b8b8b8"/><rect x="3" y="3" width="1" height="1" fill="#b8b8b8"/><rect x="6" y="3" width="1" height="1" fill="#b8b8b8"/><rect x="9" y="3" width="1" height="1" fill="#b8b8b8"/><rect x="12" y="3" width="1" height="1" fill="#b8b8b8"/><rect x="15" y="3" width="1" height="1" fill="#b8b8b8"/><rect x="18" y="3" width="1" height="1" fill="#b8b8b8"/><rect x="21" y="3" width="1" height="1" fill="#b8b8b8"/><rect x="24" y="3" width="1" height="1" fill="#b8b8b8"/><rect x="27" y="3" width="1" height="1" fill="#b8b8b8"/><rect x="30" y="3" width="1" height="1" fill="#b8b8b8"/><rect x="33" y="3" width="1" height="1" fill="#b8b8b8"/><rect x="36" y="3" width="1" height="1" fill="#b8b8b8"/><rect x="39" y="3" width="1" height="1" fill="#b8b8b8"/><rect x="42" y="3" width="1" height="1" fill="#b8b8b8"/><rect x="45" y="3" width="1" height="1" fill="#b8b8b8"/></svg>
<div style="left:1308px;top:120px;width:31px;height:832px;background:#f2f2f2;border-left:1px solid #d8d8d8;"></div>
<svg style="left:1316px;top:124px;" width="18" height="6" viewBox="0 0 18 6"><rect x="0" y="0" width="1" height="1" fill="#b0b0b0"/><rect x="3" y="0" width="1" height="1" fill="#b0b0b0"/><rect x="6" y="0" width="1" height="1" fill="#b0b0b0"/><rect x="9" y="0" width="1" height="1" fill="#b0b0b0"/><rect x="12" y="0" width="1" height="1" fill="#b0b0b0"/><rect x="15" y="0" width="1" height="1" fill="#b0b0b0"/><rect x="0" y="3" width="1" height="1" fill="#b0b0b0"/><rect x="3" y="3" width="1" height="1" fill="#b0b0b0"/><rect x="6" y="3" width="1" height="1" fill="#b0b0b0"/><rect x="9" y="3" width="1" height="1" fill="#b0b0b0"/><rect x="12" y="3" width="1" height="1" fill="#b0b0b0"/><rect x="15" y="3" width="1" height="1" fill="#b0b0b0"/></svg>
<div style="left:1311px;top:133px;width:26px;height:26px;border:1px solid #9c9c9c;border-radius:4px;background:linear-gradient(#dcdcdc,#c9c9c9);"></div>
<svg style="left:1314px;top:136px;" width="20" height="20" viewBox="0 0 20 20"><path d="M5 5 L14 13" stroke="#000" stroke-width="1.4"/><path d="M11 13.5 L15 14.5 L14 10.5 Z" fill="#000"/><rect x="2.5" y="2.5" width="4.5" height="4.5" transform="rotate(45 4.75 4.75)" fill="#c8c8ff" stroke="#2020ff" stroke-width="1.4"/><rect x="14" y="14" width="4.5" height="4.5" transform="rotate(45 16.25 16.25)" fill="#c8c8ff" stroke="#1c8c1c" stroke-width="1.4"/></svg>
<div style="left:1315px;top:165px;width:18px;height:1px;background:#d2d2d2;"></div>
<svg style="left:1314px;top:176px;" width="20" height="20" viewBox="0 0 20 20"><path d="M7 6 H17" stroke="#222" stroke-width="1.5" stroke-dasharray="1.5 1"/><path d="M5 8 V17" stroke="#222" stroke-width="1.5" stroke-dasharray="1.5 1"/><rect x="3" y="4" width="4" height="4" transform="rotate(45 5 6)" fill="#c8c8ff" stroke="#2020ff" stroke-width="1.3"/></svg>
<svg style="left:1314px;top:203px;" width="20" height="20" viewBox="0 0 20 20"><path d="M3 16 H16 V4" fill="none" stroke="#c4c4c4" stroke-width="1.4" stroke-dasharray="1.5 1"/></svg>
<svg style="left:1314px;top:231px;" width="20" height="20" viewBox="0 0 20 20"><path d="M3 16 H14" fill="none" stroke="#c4c4c4" stroke-width="1.4" stroke-dasharray="1.5 1"/><path d="M16 3 V14" fill="none" stroke="#c4c4c4" stroke-width="1.4" stroke-dasharray="1.5 1"/><rect x="14" y="14" width="4" height="4" transform="rotate(45 16 16)" fill="#ddd" stroke="#c4c4c4"/></svg>
<svg style="left:1314px;top:259px;" width="20" height="20" viewBox="0 0 20 20"><path d="M3 15 H16 V9" fill="none" stroke="#bdbdbd" stroke-width="1.3" stroke-dasharray="1.5 1"/><path d="M16 3 V6" stroke="#c4c4c4"/><ellipse cx="16" cy="5.5" rx="1.6" ry="2" fill="none" stroke="#c4c4c4" stroke-width="1.1"/></svg>
<svg style="left:1314px;top:286px;" width="20" height="20" viewBox="0 0 20 20"><path d="M3 16 H16 V7" fill="none" stroke="#bdbdbd" stroke-width="1.3" stroke-dasharray="1.5 1"/><circle cx="7" cy="8" r="1.8" fill="none" stroke="#c4c4c4" stroke-width="1.1"/></svg>
<div style="left:1315px;top:317px;width:18px;height:1px;background:#d2d2d2;"></div>
<div style="left:1311px;top:325px;width:26px;height:26px;border:1px solid #9c9c9c;border-radius:4px;background:linear-gradient(#dcdcdc,#c9c9c9);"></div>
<svg style="left:1314px;top:328px;" width="20" height="20" viewBox="0 0 20 20"><path d="M3 13 Q6 7 10 9 Q11 14 17 16" fill="none" stroke="#555" stroke-width="1.2"/><rect x="8" y="5" width="4.5" height="4.5" transform="rotate(45 10.25 7.25)" fill="#c8c8ff" stroke="#2020ff" stroke-width="1.4"/></svg>
<svg style="left:1314px;top:356px;" width="20" height="20" viewBox="0 0 20 20"><path d="M3 4 Q9 5 10 11 Q10 15 8 16 Q12 17 15 13" fill="none" stroke="#1c8c1c" stroke-width="1.5"/></svg>
<svg style="left:1314px;top:383px;" width="20" height="20" viewBox="0 0 20 20"><path d="M3 13 L17 5 M3 8 L17 13" stroke="#c8c8c8" stroke-width="1"/><circle cx="10" cy="9.5" r="1.8" fill="#ddd" stroke="#bbb"/></svg>
<svg style="left:1314px;top:411px;" width="20" height="20" viewBox="0 0 20 20"><path d="M3 3 Q10 4 10 10 Q12 13 16 9" fill="none" stroke="#333" stroke-width="1"/><rect x="8" y="10" width="4.5" height="4.5" transform="rotate(45 10.25 12.25)" fill="#a8a8ff" stroke="#1c8c1c" stroke-width="1.4"/></svg>
<svg style="left:1314px;top:439px;" width="20" height="20" viewBox="0 0 20 20"><path d="M3 8 Q6 6 9 8 Q14 10 16 12 Q15 15 11 16" fill="none" stroke="#333" stroke-width="1"/><rect x="7.5" y="6.5" width="4" height="4" fill="#a8a8ff" stroke="#1c8c1c" stroke-width="1.3"/></svg>
<svg style="left:1314px;top:467px;" width="20" height="20" viewBox="0 0 20 20"><path d="M3 16 L17 4" stroke="#444" stroke-width="0.9"/><path d="M4 13 L7 17 M6 12 L9 16 M13 4 L16 8 M15 3 L18 7" stroke="#e01818" stroke-width="1.2"/><circle cx="10" cy="10" r="2" fill="#7ac07a" stroke="#1c8c1c" stroke-width="1.2"/></svg>
<svg style="left:1314px;top:494px;" width="20" height="20" viewBox="0 0 20 20"><path d="M3 16.5 H15.5 V6" fill="none" stroke="#777" stroke-width="1.5"/><circle cx="7" cy="10" r="1.8" fill="#bdf" stroke="#1c8c1c" stroke-width="1.4"/></svg>
<svg style="left:1314px;top:522px;" width="20" height="20" viewBox="0 0 20 20"><path d="M4 9.5 H10 M7 6.5 V12.5" stroke="#222" stroke-width="1.4"/><path d="M3 16 H15 V4" fill="none" stroke="#333" stroke-width="1.2" stroke-dasharray="1.5 1"/></svg>
<div style="left:1315px;top:553px;width:18px;height:1px;background:#d2d2d2;"></div>
<svg style="left:1314px;top:563px;" width="20" height="20" viewBox="0 0 20 20"><defs><linearGradient id="gpg2" x1="0" y1="0" x2="1" y2="1"><stop offset="0" stop-color="#ffffff"/><stop offset="1" stop-color="#9a9a9a"/></linearGradient></defs><rect x="4.5" y="3.5" width="10" height="13" fill="url(#gpg2)" stroke="#000" stroke-width="1.2"/></svg>
<div style="left:1311px;top:589px;width:26px;height:26px;border:1px solid #9c9c9c;border-radius:4px;background:linear-gradient(#dcdcdc,#c9c9c9);"></div>
<svg style="left:1314px;top:592px;" width="20" height="20" viewBox="0 0 20 20"><path d="M1.5 5 H18.5 M1.5 9 H18.5 M1.5 13 H18.5 M1.5 17 H18.5 M3.5 2 V19 M7.5 2 V19 M11.5 2 V19 M15.5 2 V19" stroke="#0000ff" stroke-width="1.05"/></svg>
<div style="left:1311px;top:617px;width:26px;height:26px;border:1px solid #9c9c9c;border-radius:4px;background:linear-gradient(#dcdcdc,#c9c9c9);"></div>
<svg style="left:1314px;top:620px;" width="20" height="20" viewBox="0 0 20 20"><path d="M3.7 1.7 V18 M15.9 1.7 V18" stroke="#0000ff" stroke-width="1.1"/><path d="M8 18 L14 1.7" stroke="#0000ff" stroke-width="1.1"/></svg>
<svg style="left:16px;top:953px;overflow:hidden;" width="1306" height="20" viewBox="0 0 1306 20"><rect x="20" y="0" width="19" height="20" fill="#000000"/><rect x="39" y="0" width="19" height="20" fill="#1a1a1a"/><rect x="58" y="0" width="19" height="20" fill="#333333"/><rect x="77" y="0" width="19" height="20" fill="#4d4d4d"/><rect x="96" y="0" width="19" height="20" fill="#666666"/><rect x="115" y="0" width="19" height="20" fill="#808080"/><rect x="134" y="0" width="19" height="20" fill="#999999"/><rect x="153" y="0" width="19" height="20" fill="#b3b3b3"/><rect x="172" y="0" width="19" height="20" fill="#cccccc"/><rect x="191" y="0" width="19" height="20" fill="#e6e6e6"/><rect x="210" y="0" width="19" height="20" fill="#ececec"/><rect x="229" y="0" width="19" height="20" fill="#f2f2f2"/><rect x="248" y="0" width="19" height="20" fill="#f9f9f9"/><rect x="267" y="0" width="19" height="20" fill="#ffffff"/><rect x="286" y="0" width="19" height="20" fill="#800000"/><rect x="305" y="0" width="19" height="20" fill="#ff0000"/><rect x="324" y="0" width="19" height="20" fill="#808000"/><rect x="343" y="0" width="19" height="20" fill="#ffff00"/><rect x="362" y="0" width="19" height="20" fill="#008000"/><rect x="381" y="0" width="19" height="20" fill="#00ff00"/><rect x="400" y="0" width="19" height="20" fill="#008080"/><rect x="419" y="0" width="19" height="20" fill="#00ffff"/><rect x="438" y="0" width="19" height="20" fill="#000080"/><rect x="457" y="0" width="19" height="20" fill="#0000ff"/><rect x="476" y="0" width="19" height="20" fill="#800080"/><rect x="495" y="0" width="19" height="20" fill="#ff00ff"/><rect x="514" y="0" width="19" height="20" fill="#2b0000"/><rect x="533" y="0" width="19" height="20" fill="#550000"/><rect x="552" y="0" width="19" height="20" fill="#800000"/><rect x="571" y="0" width="19" height="20" fill="#aa0000"/><rect x="590" y="0" width="19" height="20" fill="#d40000"/><rect x="609" y="0" width="19" height="20" fill="#ff0000"/><rect x="628" y="0" width="19" height="20" fill="#ff2a2a"/><rect x="647" y="0" width="19" height="20" fill="#ff5555"/><rect x="666" y="0" width="19" height="20" fill="#ff8080"/><rect x="685" y="0" width="19" height="20" fill="#ffaaaa"/><rect x="704" y="0" width="19" height="20" fill="#ffd5d5"/><rect x="723" y="0" width="19" height="20" fill="#280b0b"/><rect x="742" y="0" width="19" height="20" fill="#501616"/><rect x="761" y="0" width="19" height="20" fill="#782121"/><rect x="780" y="0" width="19" height="20" fill="#a02c2c"/><rect x="799" y="0" width="19" height="20" fill="#c83737"/><rect x="818" y="0" width="19" height="20" fill="#d35f5f"/><rect x="837" y="0" width="19" height="20" fill="#de8787"/><rect x="856" y="0" width="19" height="20" fill="#e9afaf"/><rect x="875" y="0" width="19" height="20" fill="#f4d7d7"/><rect x="894" y="0" width="19" height="20" fill="#241c1c"/><rect x="913" y="0" width="19" height="20" fill="#483737"/><rect x="932" y="0" width="19" height="20" fill="#6c5353"/><rect x="951" y="0" width="19" height="20" fill="#916f6f"/><rect x="970" y="0" width="19" height="20" fill="#ac9393"/><rect x="989" y="0" width="19" height="20" fill="#c8b7b7"/><rect x="1008" y="0" width="19" height="20" fill="#e3dbdb"/><rect x="1027" y="0" width="19" height="20" fill="#2b1100"/><rect x="1046" y="0" width="19" height="20" fill="#552200"/><rect x="1065" y="0" width="19" height="20" fill="#803300"/><rect x="1084" y="0" width="19" height="20" fill="#aa4400"/><rect x="1103" y="0" width="19" height="20" fill="#d45500"/><rect x="1122" y="0" width="19" height="20" fill="#ff6600"/><rect x="1141" y="0" width="19" height="20" fill="#ff7f2a"/><rect x="1160" y="0" width="19" height="20" fill="#ff9955"/><rect x="1179" y="0" width="19" height="20" fill="#ffb380"/><rect x="1198" y="0" width="19" height="20" fill="#ffccaa"/><rect x="1217" y="0" width="19" height="20" fill="#ffe6d5"/><rect x="1236" y="0" width="19" height="20" fill="#28170b"/><rect x="1255" y="0" width="19" height="20" fill="#502d16"/><rect x="1274" y="0" width="19" height="20" fill="#784421"/><rect x="1293" y="0" width="19" height="20" fill="#a05a2c"/><rect x="0" y="0" width="20" height="20" fill="#fff"/><path d="M1 1 L19 19 M19 1 L1 19" stroke="#8b1010" stroke-width="2"/></svg>
<svg style="left:1323px;top:952px;" width="14" height="16" viewBox="0 0 14 16"><path d="M10 3 L5 8 L10 13" fill="none" stroke="#111" stroke-width="1.8"/></svg>
<div style="left:16px;top:975px;width:1306px;height:15px;background:linear-gradient(#dedede,#f8f8f8 40%,#f2f2f2 60%,#dadada);border-top:1px solid #c8c8c8;border-bottom:1px solid #c8c8c8;"></div>
<div style="left:31px;top:976px;width:1276px;height:14px;border-radius:7px;background:linear-gradient(#d2d2d2,#f7f7f7 40%,#f2f2f2 65%,#cfcfcf);box-shadow:inset 4px 0 4px -2px rgba(0,0,0,0.12),inset -4px 0 4px -2px rgba(0,0,0,0.12);"></div>
<svg style="left:18px;top:977px;" width="10" height="11" viewBox="0 0 10 11"><path d="M7 1.5 L1.5 5.5 L7 9.5 Z" fill="#3a3a3a"/></svg>
<svg style="left:1309px;top:977px;" width="10" height="11" viewBox="0 0 10 11"><path d="M2 1.5 L7.5 5.5 L2 9.5 Z" fill="#3a3a3a"/></svg>
<div style="left:31px;top:977px;width:202px;height:13px;border:1px solid #2a3a50;border-top-color:#1c2e48;border-bottom-color:#50555e;border-radius:7px;background:linear-gradient(#c6ced8 0%,#cdd4dc 35%,#8e9eb2 45%,#b8c8d8 60%,#e4eef8 100%);box-shadow:inset 8px 0 6px -4px rgba(20,40,70,0.6),inset -8px 0 6px -4px rgba(20,40,70,0.6);"></div>
<span class="t" style="left:18px;top:993px;font-size:12.4px;letter-spacing:0.3px;">Fill:</span>
<span class="t" style="left:18px;top:1006px;font-size:12.4px;letter-spacing:0.4px;">Stroke:</span>
<svg style="left:63px;top:992px;" width="74" height="13" viewBox="0 0 74 13"><defs><pattern id="chk" width="8" height="8" patternUnits="userSpaceOnUse"><rect width="8" height="8" fill="#9aa2b4"/><rect width="4" height="4" fill="#6d7690"/><rect x="4" y="4" width="4" height="4" fill="#6d7690"/></pattern></defs><rect x="0" y="0" width="37" height="13" fill="url(#chk)"/><rect x="37" y="0" width="37" height="13" fill="#3a5cad"/></svg>
<div style="left:63px;top:1005px;width:46px;height:14px;background:#00065e;"></div>
<span class="t" style="left:112px;top:1006px;font-size:12.5px;">1.22</span>
<span class="t" style="left:141px;top:1000px;font-size:12.5px;letter-spacing:0.3px;">O:</span>
<div style="left:157px;top:995px;width:36px;height:21px;border:1px solid #8f8f8f;border-radius:4px;background:#fff;overflow:hidden;"></div>
<span class="t" style="left:161px;top:1000px;font-size:12.8px;letter-spacing:0.5px;clip-path:inset(0 4px 0 0);">100</span>
<div style="left:178px;top:996px;width:14px;height:19px;background:linear-gradient(#f4f4f4,#e2e2e2);border-left:1px solid #b8b8b8;border-radius:0 3px 3px 0;"></div>
<svg style="left:180px;top:997px;" width="10" height="8" viewBox="0 0 10 8"><path d="M1.5 6 L5 2.5 L8.5 6" fill="none" stroke="#bdbdbd" stroke-width="1.2"/></svg>
<svg style="left:180px;top:1006px;" width="10" height="8" viewBox="0 0 10 8"><path d="M1.5 2 L5 5.5 L8.5 2" fill="none" stroke="#555" stroke-width="1.2"/></svg>
<div style="left:197px;top:993px;width:1px;height:26px;background:#d0d0d0;"></div>
<svg style="left:200px;top:997px;" width="20" height="16" viewBox="0 0 20 16"><path d="M2 9 Q10 2.5 18 9 Q10 15.5 2 9 Z" fill="#fff" stroke="#111" stroke-width="1.5"/><circle cx="10" cy="9" r="3.4" fill="#111"/><circle cx="9" cy="8" r="1" fill="#888"/><path d="M3.5 6 Q2.5 4 2 3 M6.5 4.5 Q6 2 5.5 1 M10 4 V0.5 M13.5 4.5 Q14 2 14.5 1 M16.5 6 Q17.5 4 18 3" fill="none" stroke="#111" stroke-width="1.3"/></svg>
<svg style="left:226px;top:996px;" width="16" height="18" viewBox="0 0 16 18"><defs><linearGradient id="glk" x1="0" y1="0" x2="1" y2="1"><stop offset="0" stop-color="#fff6b0"/><stop offset="1" stop-color="#e0b820"/></linearGradient></defs><path d="M8 8 V5 Q8 1.5 11 1.5 Q14 1.5 14.2 5 V7" fill="none" stroke="#222" stroke-width="1.7"/><path d="M2 9.5 L11.5 7.5 L13.5 14.5 L4 16.5 Z" fill="url(#glk)" stroke="#222" stroke-width="1"/><path d="M7.2 11 L8.8 10.6 L9.4 13.6 L8 14 Z" fill="#222"/></svg>
<div style="left:248px;top:994px;width:88px;height:24px;border:1px solid #9a9a9a;border-radius:4px;background:linear-gradient(#fafafa,#ececec);"></div>
<svg style="left:254px;top:1002px;" width="4" height="4" viewBox="0 0 4 4"><circle cx="2" cy="2" r="1.6" fill="#000"/></svg>
<span class="t" style="left:260px;top:999px;font-size:12.9px;font-weight:bold;letter-spacing:0.3px;">Layer 1</span>
<div style="left:313px;top:998px;width:1px;height:16px;background:#cfcfcf;"></div>
<svg style="left:317px;top:997px;" width="12" height="18" viewBox="0 0 12 18"><path d="M2.5 6.5 L6 3 L9.5 6.5 M2.5 11.5 L6 15 L9.5 11.5" fill="none" stroke="#222" stroke-width="1.4"/></svg>
<div style="left:1175px;top:992px;width:1px;height:27px;background:#d0d0d0;"></div>
<span class="t" style="left:1176px;top:993px;font-size:12px;">X:</span>
<span class="t" style="left:1176px;top:1006px;font-size:12px;">Y:</span>
<span class="t" style="left:1196px;top:993px;font-size:12px;font-family:&quot;Liberation Mono&quot;,monospace;">114.74</span>
<span class="t" style="left:1203px;top:1006px;font-size:12px;font-family:&quot;Liberation Mono&quot;,monospace;">60.31</span>
<span class="t" style="left:1248px;top:998px;font-size:12.5px;">Z:</span>
<div style="left:1264px;top:994px;width:55px;height:24px;border:1px solid #8f8f8f;border-radius:4px;background:#fff;"></div>
<div style="left:1305px;top:995px;width:13px;height:22px;background:linear-gradient(#f4f4f4,#e2e2e2);border-left:1px solid #b8b8b8;border-radius:0 3px 3px 0;"></div>
<svg style="left:1306px;top:997px;" width="10" height="8" viewBox="0 0 10 8"><path d="M1.5 6 L5 2.5 L8.5 6" fill="none" stroke="#222" stroke-width="1.2"/></svg>
<svg style="left:1306px;top:1006px;" width="10" height="8" viewBox="0 0 10 8"><path d="M1.5 2 L5 5.5 L8.5 2" fill="none" stroke="#222" stroke-width="1.2"/></svg>
<span class="t" style="left:1270px;top:999px;font-size:12.5px;">647%</span>
<svg style="left:1324px;top:1004px;" width="14" height="14" viewBox="0 0 14 14"><path d="M13 3 L3 13 M13 7 L7 13 M13 11 L11 13" stroke="#9a9a9a" stroke-width="1"/></svg></div></body></html>
